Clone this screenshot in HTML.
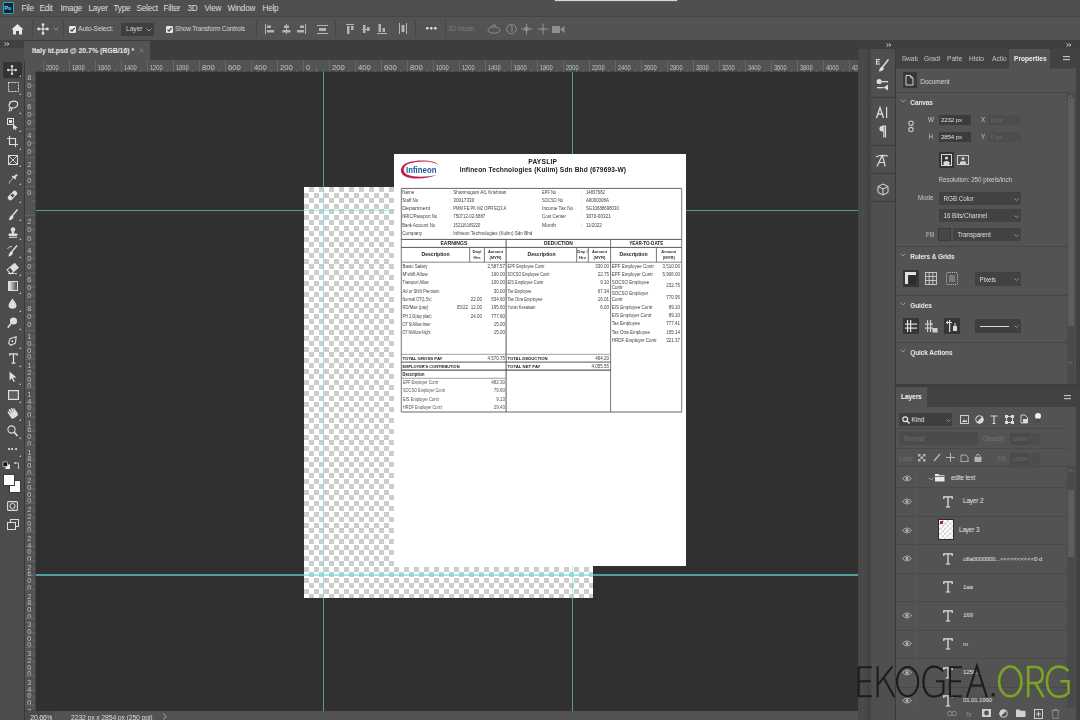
<!DOCTYPE html><html><head><meta charset="utf-8"><style>
*{margin:0;padding:0;box-sizing:border-box}
html,body{width:1080px;height:720px;overflow:hidden;background:#424242;font-family:"Liberation Sans",sans-serif;color:#d6d6d6}
.a{position:absolute}
.t{position:absolute;white-space:nowrap;line-height:1}
svg{position:absolute;overflow:visible}
</style></head><body><div id="root" style="position:absolute;left:0;top:0;width:1080px;height:720px;overflow:hidden;filter:blur(0.5px)">
<div class="a" style="left:0px;top:0px;width:1080px;height:16px;background:#4f4f4f;"></div>
<div class="a" style="left:0px;top:16px;width:1080px;height:1px;background:#444444;"></div>
<div class="a" style="left:0px;top:17px;width:1080px;height:23.5px;background:#535353;"></div>
<div class="a" style="left:0px;top:40px;width:1080px;height:1px;background:#3c3c3c;"></div>
<div class="a" style="left:555px;top:0px;width:122px;height:1px;background:#d8d8d8;"></div>
<div class="a" style="left:553px;top:1px;width:126px;height:1px;background:#606060;"></div>
<div class="a" style="left:3px;top:2px;width:11px;height:12px;background:#0a2a3a;border:1px solid #2fa3c8;border-radius:1px"></div>
<div class="t" style="left:4.6px;top:5.86px;font-size:5.6px;color:#7fd8f8;font-weight:bold;letter-spacing:-0.2px">Ps</div>
<div class="t" style="left:21.5px;top:4.66px;font-size:8.2px;color:#dedede;letter-spacing:-0.25px">File</div>
<div class="t" style="left:39.5px;top:4.66px;font-size:8.2px;color:#dedede;letter-spacing:-0.25px">Edit</div>
<div class="t" style="left:60.5px;top:4.66px;font-size:8.2px;color:#dedede;letter-spacing:-0.25px">Image</div>
<div class="t" style="left:88.5px;top:4.66px;font-size:8.2px;color:#dedede;letter-spacing:-0.25px">Layer</div>
<div class="t" style="left:113.5px;top:4.66px;font-size:8.2px;color:#dedede;letter-spacing:-0.25px">Type</div>
<div class="t" style="left:136.5px;top:4.66px;font-size:8.2px;color:#dedede;letter-spacing:-0.25px">Select</div>
<div class="t" style="left:163.5px;top:4.66px;font-size:8.2px;color:#dedede;letter-spacing:-0.25px">Filter</div>
<div class="t" style="left:187.5px;top:4.66px;font-size:8.2px;color:#dedede;letter-spacing:-0.25px">3D</div>
<div class="t" style="left:204.5px;top:4.66px;font-size:8.2px;color:#dedede;letter-spacing:-0.25px">View</div>
<div class="t" style="left:227.5px;top:4.66px;font-size:8.2px;color:#dedede;letter-spacing:-0.25px">Window</div>
<div class="t" style="left:262.5px;top:4.66px;font-size:8.2px;color:#dedede;letter-spacing:-0.25px">Help</div>
<svg style="left:11px;top:23px;" width="13" height="12" viewBox="0 0 13 12"><path d="M6.5 1 L12.5 6.5 L11 6.5 L11 11.5 L8 11.5 L8 8 L5 8 L5 11.5 L2 11.5 L2 6.5 L0.5 6.5 Z" fill="#e8e8e8"/></svg>
<div class="a" style="left:32px;top:20px;width:1px;height:17px;background:#474747;"></div>
<svg style="left:37px;top:23px;" width="12" height="12" viewBox="0 0 12 12"><g stroke="#e0e0e0" stroke-width="1.2" fill="#e0e0e0"><line x1="6" y1="1" x2="6" y2="11"/><line x1="1" y1="6" x2="11" y2="6"/></g><g fill="#e0e0e0"><circle cx="6" cy="1.6" r="1.4"/><circle cx="6" cy="10.4" r="1.4"/><circle cx="1.6" cy="6" r="1.4"/><circle cx="10.4" cy="6" r="1.4"/></g></svg>
<svg style="left:53px;top:27px;" width="6" height="4" viewBox="0 0 6 4"><path d="M0.5 0.5 L3 3 L5.5 0.5" stroke="#9a9a9a" stroke-width="0.9" fill="none"/></svg>
<div class="a" style="left:63px;top:20px;width:1px;height:17px;background:#474747;"></div>
<svg style="left:68.5px;top:25.5px;" width="7" height="7" viewBox="0 0 7 7"><rect x="0" y="0" width="7" height="7" rx="1.2" fill="#e6e6e6"/><path d="M1.5 3.6 L3 5.2 L5.6 1.8" stroke="#3a3a3a" stroke-width="1.1" fill="none"/></svg>
<div class="t" style="left:78px;top:26.24px;font-size:6.8px;color:#d2d2d2;letter-spacing:-0.15px">Auto-Select:</div>
<div class="a" style="left:121px;top:22.5px;width:33px;height:13px;background:#3e3e3e;border-radius:1px"></div>
<div class="t" style="left:126px;top:26.41px;font-size:6.6px;color:#d0d0d0;">Layer</div>
<svg style="left:146px;top:28px;" width="6" height="4" viewBox="0 0 6 4"><path d="M0.5 0.5 L3 3 L5.5 0.5" stroke="#a8a8a8" stroke-width="0.9" fill="none"/></svg>
<svg style="left:165.5px;top:25.5px;" width="7" height="7" viewBox="0 0 7 7"><rect x="0" y="0" width="7" height="7" rx="1.2" fill="#e6e6e6"/><path d="M1.5 3.6 L3 5.2 L5.6 1.8" stroke="#3a3a3a" stroke-width="1.1" fill="none"/></svg>
<div class="t" style="left:175px;top:26.41px;font-size:6.6px;color:#d2d2d2;letter-spacing:-0.2px">Show Transform Controls</div>
<div class="a" style="left:256px;top:20px;width:1px;height:17px;background:#474747;"></div>
<svg style="left:265px;top:24px;" width="9" height="10" viewBox="0 0 9 10"><rect x="0" y="0" width="1" height="10" fill="#b4b4b4"/><rect x="2" y="1.5" width="4" height="2.5" fill="#b4b4b4"/><rect x="2" y="6" width="7" height="2.5" fill="#b4b4b4"/></svg>
<svg style="left:282px;top:24px;" width="9" height="10" viewBox="0 0 9 10"><rect x="4" y="0" width="1" height="10" fill="#b4b4b4"/><rect x="2" y="1.5" width="5" height="2.5" fill="#b4b4b4"/><rect x="0.5" y="6" width="8" height="2.5" fill="#b4b4b4"/></svg>
<svg style="left:297px;top:24px;" width="9" height="10" viewBox="0 0 9 10"><rect x="8" y="0" width="1" height="10" fill="#b4b4b4"/><rect x="3" y="1.5" width="4" height="2.5" fill="#b4b4b4"/><rect x="0" y="6" width="7" height="2.5" fill="#b4b4b4"/></svg>
<svg style="left:317px;top:25px;" width="11" height="9" viewBox="0 0 11 9"><rect x="0" y="0" width="11" height="1" fill="#b4b4b4"/><rect x="2" y="3" width="7" height="3" fill="#b4b4b4"/><rect x="0" y="8" width="11" height="1" fill="#b4b4b4"/></svg>
<div class="a" style="left:335px;top:20px;width:1px;height:17px;background:#474747;"></div>
<svg style="left:346px;top:24px;" width="8" height="10" viewBox="0 0 8 10"><rect x="0" y="0" width="8" height="1" fill="#b4b4b4"/><rect x="1" y="2" width="2.5" height="8" fill="#b4b4b4"/><rect x="5" y="2" width="2.5" height="4" fill="#b4b4b4"/></svg>
<svg style="left:362px;top:24px;" width="8" height="10" viewBox="0 0 8 10"><rect x="0" y="5" width="8" height="1" fill="#b4b4b4"/><rect x="1" y="1" width="2.5" height="8" fill="#b4b4b4"/><rect x="5" y="3" width="2.5" height="4" fill="#b4b4b4"/></svg>
<svg style="left:377px;top:24px;" width="10" height="10" viewBox="0 0 10 10"><rect x="0" y="9" width="10" height="1" fill="#b4b4b4"/><rect x="1.5" y="0" width="2.5" height="8" fill="#b4b4b4"/><rect x="5.5" y="4" width="2.5" height="4" fill="#b4b4b4"/></svg>
<svg style="left:399px;top:23px;" width="8" height="11" viewBox="0 0 8 11"><rect x="0" y="0" width="1" height="11" fill="#b4b4b4"/><rect x="2.5" y="2" width="3" height="7" fill="#b4b4b4"/><rect x="7" y="0" width="1" height="11" fill="#b4b4b4"/></svg>
<div class="a" style="left:415px;top:20px;width:1px;height:17px;background:#474747;"></div>
<svg style="left:425.7px;top:27.2px;" width="3" height="3" viewBox="0 0 3 3"><circle cx="1.3" cy="1.3" r="1.3" fill="#e6e6e6"/></svg>
<svg style="left:429.7px;top:27.2px;" width="3" height="3" viewBox="0 0 3 3"><circle cx="1.3" cy="1.3" r="1.3" fill="#e6e6e6"/></svg>
<svg style="left:433.7px;top:27.2px;" width="3" height="3" viewBox="0 0 3 3"><circle cx="1.3" cy="1.3" r="1.3" fill="#e6e6e6"/></svg>
<div class="a" style="left:445px;top:20px;width:1px;height:17px;background:#474747;"></div>
<div class="t" style="left:448px;top:26.41px;font-size:6.6px;color:#7a7a7a;letter-spacing:-0.2px">3D Mode:</div>
<svg style="left:487px;top:23px;" width="14" height="12" viewBox="0 0 14 12"><ellipse cx="7" cy="7" rx="6" ry="3.2" stroke="#8e8e8e" stroke-width="1" fill="none"/><path d="M3 5 Q5 1 9 2" stroke="#8e8e8e" stroke-width="1" fill="none"/></svg>
<svg style="left:506px;top:23px;" width="11" height="12" viewBox="0 0 11 12"><circle cx="5.5" cy="6" r="4.8" stroke="#8e8e8e" stroke-width="1" fill="none"/><path d="M4 3 L6 3 L6 9" stroke="#8e8e8e" stroke-width="1" fill="none"/></svg>
<svg style="left:521px;top:23px;" width="11" height="12" viewBox="0 0 11 12"><g stroke="#8e8e8e" stroke-width="1.1"><line x1="5.5" y1="0.5" x2="5.5" y2="11.5"/><line x1="0" y1="6" x2="11" y2="6"/></g><rect x="3.5" y="4" width="4" height="4" fill="#8e8e8e"/></svg>
<svg style="left:537px;top:23px;" width="12" height="12" viewBox="0 0 12 12"><g stroke="#8e8e8e" stroke-width="1.1"><line x1="6" y1="0.5" x2="6" y2="4"/><line x1="6" y1="8" x2="6" y2="11.5"/><line x1="0.5" y1="6" x2="4" y2="6"/><line x1="8" y1="6" x2="11.5" y2="6"/></g><rect x="4.5" y="4.5" width="3" height="3" fill="#8e8e8e"/></svg>
<svg style="left:552px;top:25px;" width="13" height="9" viewBox="0 0 13 9"><rect x="0" y="1" width="8" height="7" fill="#8e8e8e"/><path d="M8 4.5 L12.5 1 L12.5 8 Z" fill="#8e8e8e"/></svg>
<div class="a" style="left:0px;top:40px;width:24px;height:680px;background:#4c4c4c;"></div>
<div class="a" style="left:0px;top:40px;width:24px;height:8px;background:#404040;"></div>
<svg style="left:4px;top:42px;" width="6" height="4" viewBox="0 0 6 4"><path d="M0.5 0.5 L2.5 2 L0.5 3.5 M3 0.5 L5 2 L3 3.5" stroke="#c8c8c8" stroke-width="0.9" fill="none"/></svg>
<div class="a" style="left:24px;top:40px;width:1px;height:680px;background:#383838;"></div>
<div class="a" style="left:25px;top:40px;width:833px;height:20px;background:#3d3d3d;"></div>
<div class="a" style="left:24px;top:41px;width:126px;height:19.5px;background:#535353;"></div>
<div class="t" style="left:32px;top:47.47px;font-size:7.0px;color:#e8e8e8;font-weight:bold;letter-spacing:-0.05px">Italy id.psd @ 20.7% (RGB/16) *</div>
<svg style="left:139px;top:48px;" width="5" height="5" viewBox="0 0 5 5"><path d="M0.5 0.5 L4.5 4.5 M4.5 0.5 L0.5 4.5" stroke="#8a8a8a" stroke-width="0.8"/></svg>
<div class="a" style="left:25px;top:60px;width:833px;height:12px;background:#535353;"></div>
<div class="a" style="left:25px;top:72px;width:11px;height:638px;background:#535353;"></div>
<div class="a" style="left:25px;top:71px;width:833px;height:1px;background:#464646;"></div>
<div class="a" style="left:35px;top:72px;width:1px;height:639px;background:#464646;"></div>
<svg style="left:0px;top:60px" width="858" height="12" viewBox="0 0 858 12"><rect x="43.0" y="0" width="1" height="12" fill="#666666"/><rect x="49.5" y="10" width="1" height="2" fill="#6a6a6a"/><rect x="56.0" y="8" width="1" height="4" fill="#6a6a6a"/><rect x="62.5" y="10" width="1" height="2" fill="#6a6a6a"/><text x="45.9" y="10.4" font-size="7.4" fill="#c4c4c4" font-family="Liberation Sans" textLength="12.8" lengthAdjust="spacingAndGlyphs">2000</text><rect x="69.0" y="0" width="1" height="12" fill="#666666"/><rect x="75.5" y="10" width="1" height="2" fill="#6a6a6a"/><rect x="82.0" y="8" width="1" height="4" fill="#6a6a6a"/><rect x="88.5" y="10" width="1" height="2" fill="#6a6a6a"/><text x="71.9" y="10.4" font-size="7.4" fill="#c4c4c4" font-family="Liberation Sans" textLength="12.8" lengthAdjust="spacingAndGlyphs">1800</text><rect x="95.0" y="0" width="1" height="12" fill="#666666"/><rect x="101.5" y="10" width="1" height="2" fill="#6a6a6a"/><rect x="108.0" y="8" width="1" height="4" fill="#6a6a6a"/><rect x="114.5" y="10" width="1" height="2" fill="#6a6a6a"/><text x="97.9" y="10.4" font-size="7.4" fill="#c4c4c4" font-family="Liberation Sans" textLength="12.8" lengthAdjust="spacingAndGlyphs">1600</text><rect x="121.0" y="0" width="1" height="12" fill="#666666"/><rect x="127.5" y="10" width="1" height="2" fill="#6a6a6a"/><rect x="134.0" y="8" width="1" height="4" fill="#6a6a6a"/><rect x="140.5" y="10" width="1" height="2" fill="#6a6a6a"/><text x="123.9" y="10.4" font-size="7.4" fill="#c4c4c4" font-family="Liberation Sans" textLength="12.8" lengthAdjust="spacingAndGlyphs">1400</text><rect x="147.0" y="0" width="1" height="12" fill="#666666"/><rect x="153.5" y="10" width="1" height="2" fill="#6a6a6a"/><rect x="160.0" y="8" width="1" height="4" fill="#6a6a6a"/><rect x="166.5" y="10" width="1" height="2" fill="#6a6a6a"/><text x="149.9" y="10.4" font-size="7.4" fill="#c4c4c4" font-family="Liberation Sans" textLength="12.8" lengthAdjust="spacingAndGlyphs">1200</text><rect x="173.0" y="0" width="1" height="12" fill="#666666"/><rect x="179.5" y="10" width="1" height="2" fill="#6a6a6a"/><rect x="186.0" y="8" width="1" height="4" fill="#6a6a6a"/><rect x="192.5" y="10" width="1" height="2" fill="#6a6a6a"/><text x="175.9" y="10.4" font-size="7.4" fill="#c4c4c4" font-family="Liberation Sans" textLength="12.8" lengthAdjust="spacingAndGlyphs">1000</text><rect x="199.0" y="0" width="1" height="12" fill="#666666"/><rect x="205.5" y="10" width="1" height="2" fill="#6a6a6a"/><rect x="212.0" y="8" width="1" height="4" fill="#6a6a6a"/><rect x="218.5" y="10" width="1" height="2" fill="#6a6a6a"/><text x="201.9" y="10.4" font-size="7.4" fill="#c4c4c4" font-family="Liberation Sans" textLength="12.8" lengthAdjust="spacingAndGlyphs">800</text><rect x="225.0" y="0" width="1" height="12" fill="#666666"/><rect x="231.5" y="10" width="1" height="2" fill="#6a6a6a"/><rect x="238.0" y="8" width="1" height="4" fill="#6a6a6a"/><rect x="244.5" y="10" width="1" height="2" fill="#6a6a6a"/><text x="227.9" y="10.4" font-size="7.4" fill="#c4c4c4" font-family="Liberation Sans" textLength="12.8" lengthAdjust="spacingAndGlyphs">600</text><rect x="251.0" y="0" width="1" height="12" fill="#666666"/><rect x="257.5" y="10" width="1" height="2" fill="#6a6a6a"/><rect x="264.0" y="8" width="1" height="4" fill="#6a6a6a"/><rect x="270.5" y="10" width="1" height="2" fill="#6a6a6a"/><text x="253.9" y="10.4" font-size="7.4" fill="#c4c4c4" font-family="Liberation Sans" textLength="12.8" lengthAdjust="spacingAndGlyphs">400</text><rect x="277.0" y="0" width="1" height="12" fill="#666666"/><rect x="283.5" y="10" width="1" height="2" fill="#6a6a6a"/><rect x="290.0" y="8" width="1" height="4" fill="#6a6a6a"/><rect x="296.5" y="10" width="1" height="2" fill="#6a6a6a"/><text x="279.9" y="10.4" font-size="7.4" fill="#c4c4c4" font-family="Liberation Sans" textLength="12.8" lengthAdjust="spacingAndGlyphs">200</text><rect x="303.0" y="0" width="1" height="12" fill="#666666"/><rect x="309.5" y="10" width="1" height="2" fill="#6a6a6a"/><rect x="316.0" y="8" width="1" height="4" fill="#6a6a6a"/><rect x="322.5" y="10" width="1" height="2" fill="#6a6a6a"/><text x="305.9" y="10.4" font-size="7.4" fill="#c4c4c4" font-family="Liberation Sans" textLength="4.1" lengthAdjust="spacingAndGlyphs">0</text><rect x="329.0" y="0" width="1" height="12" fill="#666666"/><rect x="335.5" y="10" width="1" height="2" fill="#6a6a6a"/><rect x="342.0" y="8" width="1" height="4" fill="#6a6a6a"/><rect x="348.5" y="10" width="1" height="2" fill="#6a6a6a"/><text x="331.9" y="10.4" font-size="7.4" fill="#c4c4c4" font-family="Liberation Sans" textLength="12.8" lengthAdjust="spacingAndGlyphs">200</text><rect x="355.0" y="0" width="1" height="12" fill="#666666"/><rect x="361.5" y="10" width="1" height="2" fill="#6a6a6a"/><rect x="368.0" y="8" width="1" height="4" fill="#6a6a6a"/><rect x="374.5" y="10" width="1" height="2" fill="#6a6a6a"/><text x="357.9" y="10.4" font-size="7.4" fill="#c4c4c4" font-family="Liberation Sans" textLength="12.8" lengthAdjust="spacingAndGlyphs">400</text><rect x="381.0" y="0" width="1" height="12" fill="#666666"/><rect x="387.5" y="10" width="1" height="2" fill="#6a6a6a"/><rect x="394.0" y="8" width="1" height="4" fill="#6a6a6a"/><rect x="400.5" y="10" width="1" height="2" fill="#6a6a6a"/><text x="383.9" y="10.4" font-size="7.4" fill="#c4c4c4" font-family="Liberation Sans" textLength="12.8" lengthAdjust="spacingAndGlyphs">600</text><rect x="407.0" y="0" width="1" height="12" fill="#666666"/><rect x="413.5" y="10" width="1" height="2" fill="#6a6a6a"/><rect x="420.0" y="8" width="1" height="4" fill="#6a6a6a"/><rect x="426.5" y="10" width="1" height="2" fill="#6a6a6a"/><text x="409.9" y="10.4" font-size="7.4" fill="#c4c4c4" font-family="Liberation Sans" textLength="12.8" lengthAdjust="spacingAndGlyphs">800</text><rect x="433.0" y="0" width="1" height="12" fill="#666666"/><rect x="439.5" y="10" width="1" height="2" fill="#6a6a6a"/><rect x="446.0" y="8" width="1" height="4" fill="#6a6a6a"/><rect x="452.5" y="10" width="1" height="2" fill="#6a6a6a"/><text x="435.9" y="10.4" font-size="7.4" fill="#c4c4c4" font-family="Liberation Sans" textLength="12.8" lengthAdjust="spacingAndGlyphs">1000</text><rect x="459.0" y="0" width="1" height="12" fill="#666666"/><rect x="465.5" y="10" width="1" height="2" fill="#6a6a6a"/><rect x="472.0" y="8" width="1" height="4" fill="#6a6a6a"/><rect x="478.5" y="10" width="1" height="2" fill="#6a6a6a"/><text x="461.9" y="10.4" font-size="7.4" fill="#c4c4c4" font-family="Liberation Sans" textLength="12.8" lengthAdjust="spacingAndGlyphs">1200</text><rect x="485.0" y="0" width="1" height="12" fill="#666666"/><rect x="491.5" y="10" width="1" height="2" fill="#6a6a6a"/><rect x="498.0" y="8" width="1" height="4" fill="#6a6a6a"/><rect x="504.5" y="10" width="1" height="2" fill="#6a6a6a"/><text x="487.9" y="10.4" font-size="7.4" fill="#c4c4c4" font-family="Liberation Sans" textLength="12.8" lengthAdjust="spacingAndGlyphs">1400</text><rect x="511.0" y="0" width="1" height="12" fill="#666666"/><rect x="517.5" y="10" width="1" height="2" fill="#6a6a6a"/><rect x="524.0" y="8" width="1" height="4" fill="#6a6a6a"/><rect x="530.5" y="10" width="1" height="2" fill="#6a6a6a"/><text x="513.9" y="10.4" font-size="7.4" fill="#c4c4c4" font-family="Liberation Sans" textLength="12.8" lengthAdjust="spacingAndGlyphs">1600</text><rect x="537.0" y="0" width="1" height="12" fill="#666666"/><rect x="543.5" y="10" width="1" height="2" fill="#6a6a6a"/><rect x="550.0" y="8" width="1" height="4" fill="#6a6a6a"/><rect x="556.5" y="10" width="1" height="2" fill="#6a6a6a"/><text x="539.9" y="10.4" font-size="7.4" fill="#c4c4c4" font-family="Liberation Sans" textLength="12.8" lengthAdjust="spacingAndGlyphs">1800</text><rect x="563.0" y="0" width="1" height="12" fill="#666666"/><rect x="569.5" y="10" width="1" height="2" fill="#6a6a6a"/><rect x="576.0" y="8" width="1" height="4" fill="#6a6a6a"/><rect x="582.5" y="10" width="1" height="2" fill="#6a6a6a"/><text x="565.9" y="10.4" font-size="7.4" fill="#c4c4c4" font-family="Liberation Sans" textLength="12.8" lengthAdjust="spacingAndGlyphs">2000</text><rect x="589.0" y="0" width="1" height="12" fill="#666666"/><rect x="595.5" y="10" width="1" height="2" fill="#6a6a6a"/><rect x="602.0" y="8" width="1" height="4" fill="#6a6a6a"/><rect x="608.5" y="10" width="1" height="2" fill="#6a6a6a"/><text x="591.9" y="10.4" font-size="7.4" fill="#c4c4c4" font-family="Liberation Sans" textLength="12.8" lengthAdjust="spacingAndGlyphs">2200</text><rect x="615.0" y="0" width="1" height="12" fill="#666666"/><rect x="621.5" y="10" width="1" height="2" fill="#6a6a6a"/><rect x="628.0" y="8" width="1" height="4" fill="#6a6a6a"/><rect x="634.5" y="10" width="1" height="2" fill="#6a6a6a"/><text x="617.9" y="10.4" font-size="7.4" fill="#c4c4c4" font-family="Liberation Sans" textLength="12.8" lengthAdjust="spacingAndGlyphs">2400</text><rect x="641.0" y="0" width="1" height="12" fill="#666666"/><rect x="647.5" y="10" width="1" height="2" fill="#6a6a6a"/><rect x="654.0" y="8" width="1" height="4" fill="#6a6a6a"/><rect x="660.5" y="10" width="1" height="2" fill="#6a6a6a"/><text x="643.9" y="10.4" font-size="7.4" fill="#c4c4c4" font-family="Liberation Sans" textLength="12.8" lengthAdjust="spacingAndGlyphs">2600</text><rect x="667.0" y="0" width="1" height="12" fill="#666666"/><rect x="673.5" y="10" width="1" height="2" fill="#6a6a6a"/><rect x="680.0" y="8" width="1" height="4" fill="#6a6a6a"/><rect x="686.5" y="10" width="1" height="2" fill="#6a6a6a"/><text x="669.9" y="10.4" font-size="7.4" fill="#c4c4c4" font-family="Liberation Sans" textLength="12.8" lengthAdjust="spacingAndGlyphs">2800</text><rect x="693.0" y="0" width="1" height="12" fill="#666666"/><rect x="699.5" y="10" width="1" height="2" fill="#6a6a6a"/><rect x="706.0" y="8" width="1" height="4" fill="#6a6a6a"/><rect x="712.5" y="10" width="1" height="2" fill="#6a6a6a"/><text x="695.9" y="10.4" font-size="7.4" fill="#c4c4c4" font-family="Liberation Sans" textLength="12.8" lengthAdjust="spacingAndGlyphs">3000</text><rect x="719.0" y="0" width="1" height="12" fill="#666666"/><rect x="725.5" y="10" width="1" height="2" fill="#6a6a6a"/><rect x="732.0" y="8" width="1" height="4" fill="#6a6a6a"/><rect x="738.5" y="10" width="1" height="2" fill="#6a6a6a"/><text x="721.9" y="10.4" font-size="7.4" fill="#c4c4c4" font-family="Liberation Sans" textLength="12.8" lengthAdjust="spacingAndGlyphs">3200</text><rect x="745.0" y="0" width="1" height="12" fill="#666666"/><rect x="751.5" y="10" width="1" height="2" fill="#6a6a6a"/><rect x="758.0" y="8" width="1" height="4" fill="#6a6a6a"/><rect x="764.5" y="10" width="1" height="2" fill="#6a6a6a"/><text x="747.9" y="10.4" font-size="7.4" fill="#c4c4c4" font-family="Liberation Sans" textLength="12.8" lengthAdjust="spacingAndGlyphs">3400</text><rect x="771.0" y="0" width="1" height="12" fill="#666666"/><rect x="777.5" y="10" width="1" height="2" fill="#6a6a6a"/><rect x="784.0" y="8" width="1" height="4" fill="#6a6a6a"/><rect x="790.5" y="10" width="1" height="2" fill="#6a6a6a"/><text x="773.9" y="10.4" font-size="7.4" fill="#c4c4c4" font-family="Liberation Sans" textLength="12.8" lengthAdjust="spacingAndGlyphs">3600</text><rect x="797.0" y="0" width="1" height="12" fill="#666666"/><rect x="803.5" y="10" width="1" height="2" fill="#6a6a6a"/><rect x="810.0" y="8" width="1" height="4" fill="#6a6a6a"/><rect x="816.5" y="10" width="1" height="2" fill="#6a6a6a"/><text x="799.9" y="10.4" font-size="7.4" fill="#c4c4c4" font-family="Liberation Sans" textLength="12.8" lengthAdjust="spacingAndGlyphs">3800</text><rect x="823.0" y="0" width="1" height="12" fill="#666666"/><rect x="829.5" y="10" width="1" height="2" fill="#6a6a6a"/><rect x="836.0" y="8" width="1" height="4" fill="#6a6a6a"/><rect x="842.5" y="10" width="1" height="2" fill="#6a6a6a"/><text x="825.9" y="10.4" font-size="7.4" fill="#c4c4c4" font-family="Liberation Sans" textLength="12.8" lengthAdjust="spacingAndGlyphs">4000</text><rect x="849.0" y="0" width="1" height="12" fill="#666666"/><rect x="855.5" y="10" width="1" height="2" fill="#6a6a6a"/><text x="851.9" y="10.4" font-size="7.4" fill="#c4c4c4" font-family="Liberation Sans" textLength="12.8" lengthAdjust="spacingAndGlyphs">4200</text></svg>
<svg style="left:25px;top:0px" width="10" height="720" viewBox="0 0 10 720"><rect x="0" y="70.8" width="10" height="1" fill="#666666"/><rect x="8" y="78.0" width="2" height="1" fill="#6a6a6a"/><rect x="6" y="85.2" width="4" height="1" fill="#6a6a6a"/><rect x="8" y="92.4" width="2" height="1" fill="#6a6a6a"/><text x="2.3" y="80.1" font-size="7.4" fill="#c0c0c0" font-family="Liberation Sans">8</text><text x="2.3" y="88.3" font-size="7.4" fill="#c0c0c0" font-family="Liberation Sans">0</text><text x="2.3" y="96.5" font-size="7.4" fill="#c0c0c0" font-family="Liberation Sans">0</text><rect x="0" y="99.6" width="10" height="1" fill="#666666"/><rect x="8" y="106.8" width="2" height="1" fill="#6a6a6a"/><rect x="6" y="114.0" width="4" height="1" fill="#6a6a6a"/><rect x="8" y="121.2" width="2" height="1" fill="#6a6a6a"/><text x="2.3" y="108.9" font-size="7.4" fill="#c0c0c0" font-family="Liberation Sans">6</text><text x="2.3" y="117.1" font-size="7.4" fill="#c0c0c0" font-family="Liberation Sans">0</text><text x="2.3" y="125.3" font-size="7.4" fill="#c0c0c0" font-family="Liberation Sans">0</text><rect x="0" y="128.4" width="10" height="1" fill="#666666"/><rect x="8" y="135.6" width="2" height="1" fill="#6a6a6a"/><rect x="6" y="142.8" width="4" height="1" fill="#6a6a6a"/><rect x="8" y="150.0" width="2" height="1" fill="#6a6a6a"/><text x="2.3" y="137.7" font-size="7.4" fill="#c0c0c0" font-family="Liberation Sans">4</text><text x="2.3" y="145.9" font-size="7.4" fill="#c0c0c0" font-family="Liberation Sans">0</text><text x="2.3" y="154.1" font-size="7.4" fill="#c0c0c0" font-family="Liberation Sans">0</text><rect x="0" y="157.2" width="10" height="1" fill="#666666"/><rect x="8" y="164.4" width="2" height="1" fill="#6a6a6a"/><rect x="6" y="171.6" width="4" height="1" fill="#6a6a6a"/><rect x="8" y="178.8" width="2" height="1" fill="#6a6a6a"/><text x="2.3" y="166.5" font-size="7.4" fill="#c0c0c0" font-family="Liberation Sans">2</text><text x="2.3" y="174.7" font-size="7.4" fill="#c0c0c0" font-family="Liberation Sans">0</text><text x="2.3" y="182.9" font-size="7.4" fill="#c0c0c0" font-family="Liberation Sans">0</text><rect x="0" y="186.0" width="10" height="1" fill="#666666"/><rect x="8" y="193.2" width="2" height="1" fill="#6a6a6a"/><rect x="6" y="200.4" width="4" height="1" fill="#6a6a6a"/><rect x="8" y="207.6" width="2" height="1" fill="#6a6a6a"/><text x="2.3" y="195.3" font-size="7.4" fill="#c0c0c0" font-family="Liberation Sans">0</text><rect x="0" y="214.8" width="10" height="1" fill="#666666"/><rect x="8" y="222.0" width="2" height="1" fill="#6a6a6a"/><rect x="6" y="229.2" width="4" height="1" fill="#6a6a6a"/><rect x="8" y="236.4" width="2" height="1" fill="#6a6a6a"/><text x="2.3" y="224.1" font-size="7.4" fill="#c0c0c0" font-family="Liberation Sans">2</text><text x="2.3" y="232.3" font-size="7.4" fill="#c0c0c0" font-family="Liberation Sans">0</text><text x="2.3" y="240.5" font-size="7.4" fill="#c0c0c0" font-family="Liberation Sans">0</text><rect x="0" y="243.6" width="10" height="1" fill="#666666"/><rect x="8" y="250.8" width="2" height="1" fill="#6a6a6a"/><rect x="6" y="258.0" width="4" height="1" fill="#6a6a6a"/><rect x="8" y="265.2" width="2" height="1" fill="#6a6a6a"/><text x="2.3" y="252.9" font-size="7.4" fill="#c0c0c0" font-family="Liberation Sans">4</text><text x="2.3" y="261.1" font-size="7.4" fill="#c0c0c0" font-family="Liberation Sans">0</text><text x="2.3" y="269.3" font-size="7.4" fill="#c0c0c0" font-family="Liberation Sans">0</text><rect x="0" y="272.4" width="10" height="1" fill="#666666"/><rect x="8" y="279.6" width="2" height="1" fill="#6a6a6a"/><rect x="6" y="286.8" width="4" height="1" fill="#6a6a6a"/><rect x="8" y="294.0" width="2" height="1" fill="#6a6a6a"/><text x="2.3" y="281.7" font-size="7.4" fill="#c0c0c0" font-family="Liberation Sans">6</text><text x="2.3" y="289.9" font-size="7.4" fill="#c0c0c0" font-family="Liberation Sans">0</text><text x="2.3" y="298.1" font-size="7.4" fill="#c0c0c0" font-family="Liberation Sans">0</text><rect x="0" y="301.2" width="10" height="1" fill="#666666"/><rect x="8" y="308.4" width="2" height="1" fill="#6a6a6a"/><rect x="6" y="315.6" width="4" height="1" fill="#6a6a6a"/><rect x="8" y="322.8" width="2" height="1" fill="#6a6a6a"/><text x="2.3" y="310.5" font-size="7.4" fill="#c0c0c0" font-family="Liberation Sans">8</text><text x="2.3" y="318.7" font-size="7.4" fill="#c0c0c0" font-family="Liberation Sans">0</text><text x="2.3" y="326.9" font-size="7.4" fill="#c0c0c0" font-family="Liberation Sans">0</text><rect x="0" y="330.0" width="10" height="1" fill="#666666"/><rect x="8" y="337.2" width="2" height="1" fill="#6a6a6a"/><rect x="6" y="344.4" width="4" height="1" fill="#6a6a6a"/><rect x="8" y="351.6" width="2" height="1" fill="#6a6a6a"/><text x="2.3" y="339.3" font-size="7.4" fill="#c0c0c0" font-family="Liberation Sans">1</text><text x="2.3" y="346.0" font-size="7.4" fill="#c0c0c0" font-family="Liberation Sans">0</text><text x="2.3" y="352.7" font-size="7.4" fill="#c0c0c0" font-family="Liberation Sans">0</text><text x="2.3" y="359.4" font-size="7.4" fill="#c0c0c0" font-family="Liberation Sans">0</text><rect x="0" y="358.8" width="10" height="1" fill="#666666"/><rect x="8" y="366.0" width="2" height="1" fill="#6a6a6a"/><rect x="6" y="373.2" width="4" height="1" fill="#6a6a6a"/><rect x="8" y="380.4" width="2" height="1" fill="#6a6a6a"/><text x="2.3" y="368.1" font-size="7.4" fill="#c0c0c0" font-family="Liberation Sans">1</text><text x="2.3" y="374.8" font-size="7.4" fill="#c0c0c0" font-family="Liberation Sans">2</text><text x="2.3" y="381.5" font-size="7.4" fill="#c0c0c0" font-family="Liberation Sans">0</text><text x="2.3" y="388.2" font-size="7.4" fill="#c0c0c0" font-family="Liberation Sans">0</text><rect x="0" y="387.6" width="10" height="1" fill="#666666"/><rect x="8" y="394.8" width="2" height="1" fill="#6a6a6a"/><rect x="6" y="402.0" width="4" height="1" fill="#6a6a6a"/><rect x="8" y="409.2" width="2" height="1" fill="#6a6a6a"/><text x="2.3" y="396.9" font-size="7.4" fill="#c0c0c0" font-family="Liberation Sans">1</text><text x="2.3" y="403.6" font-size="7.4" fill="#c0c0c0" font-family="Liberation Sans">4</text><text x="2.3" y="410.3" font-size="7.4" fill="#c0c0c0" font-family="Liberation Sans">0</text><text x="2.3" y="417.0" font-size="7.4" fill="#c0c0c0" font-family="Liberation Sans">0</text><rect x="0" y="416.4" width="10" height="1" fill="#666666"/><rect x="8" y="423.6" width="2" height="1" fill="#6a6a6a"/><rect x="6" y="430.8" width="4" height="1" fill="#6a6a6a"/><rect x="8" y="438.0" width="2" height="1" fill="#6a6a6a"/><text x="2.3" y="425.7" font-size="7.4" fill="#c0c0c0" font-family="Liberation Sans">1</text><text x="2.3" y="432.4" font-size="7.4" fill="#c0c0c0" font-family="Liberation Sans">6</text><text x="2.3" y="439.1" font-size="7.4" fill="#c0c0c0" font-family="Liberation Sans">0</text><text x="2.3" y="445.8" font-size="7.4" fill="#c0c0c0" font-family="Liberation Sans">0</text><rect x="0" y="445.2" width="10" height="1" fill="#666666"/><rect x="8" y="452.4" width="2" height="1" fill="#6a6a6a"/><rect x="6" y="459.6" width="4" height="1" fill="#6a6a6a"/><rect x="8" y="466.8" width="2" height="1" fill="#6a6a6a"/><text x="2.3" y="454.5" font-size="7.4" fill="#c0c0c0" font-family="Liberation Sans">1</text><text x="2.3" y="461.2" font-size="7.4" fill="#c0c0c0" font-family="Liberation Sans">8</text><text x="2.3" y="467.9" font-size="7.4" fill="#c0c0c0" font-family="Liberation Sans">0</text><text x="2.3" y="474.6" font-size="7.4" fill="#c0c0c0" font-family="Liberation Sans">0</text><rect x="0" y="474.0" width="10" height="1" fill="#666666"/><rect x="8" y="481.2" width="2" height="1" fill="#6a6a6a"/><rect x="6" y="488.4" width="4" height="1" fill="#6a6a6a"/><rect x="8" y="495.6" width="2" height="1" fill="#6a6a6a"/><text x="2.3" y="483.3" font-size="7.4" fill="#c0c0c0" font-family="Liberation Sans">2</text><text x="2.3" y="490.0" font-size="7.4" fill="#c0c0c0" font-family="Liberation Sans">0</text><text x="2.3" y="496.7" font-size="7.4" fill="#c0c0c0" font-family="Liberation Sans">0</text><text x="2.3" y="503.4" font-size="7.4" fill="#c0c0c0" font-family="Liberation Sans">0</text><rect x="0" y="502.8" width="10" height="1" fill="#666666"/><rect x="8" y="510.0" width="2" height="1" fill="#6a6a6a"/><rect x="6" y="517.2" width="4" height="1" fill="#6a6a6a"/><rect x="8" y="524.4" width="2" height="1" fill="#6a6a6a"/><text x="2.3" y="512.1" font-size="7.4" fill="#c0c0c0" font-family="Liberation Sans">2</text><text x="2.3" y="518.8" font-size="7.4" fill="#c0c0c0" font-family="Liberation Sans">2</text><text x="2.3" y="525.5" font-size="7.4" fill="#c0c0c0" font-family="Liberation Sans">0</text><text x="2.3" y="532.2" font-size="7.4" fill="#c0c0c0" font-family="Liberation Sans">0</text><rect x="0" y="531.6" width="10" height="1" fill="#666666"/><rect x="8" y="538.8" width="2" height="1" fill="#6a6a6a"/><rect x="6" y="546.0" width="4" height="1" fill="#6a6a6a"/><rect x="8" y="553.2" width="2" height="1" fill="#6a6a6a"/><text x="2.3" y="540.9" font-size="7.4" fill="#c0c0c0" font-family="Liberation Sans">2</text><text x="2.3" y="547.6" font-size="7.4" fill="#c0c0c0" font-family="Liberation Sans">4</text><text x="2.3" y="554.3" font-size="7.4" fill="#c0c0c0" font-family="Liberation Sans">0</text><text x="2.3" y="561.0" font-size="7.4" fill="#c0c0c0" font-family="Liberation Sans">0</text><rect x="0" y="560.4" width="10" height="1" fill="#666666"/><rect x="8" y="567.6" width="2" height="1" fill="#6a6a6a"/><rect x="6" y="574.8" width="4" height="1" fill="#6a6a6a"/><rect x="8" y="582.0" width="2" height="1" fill="#6a6a6a"/><text x="2.3" y="569.7" font-size="7.4" fill="#c0c0c0" font-family="Liberation Sans">2</text><text x="2.3" y="576.4" font-size="7.4" fill="#c0c0c0" font-family="Liberation Sans">6</text><text x="2.3" y="583.1" font-size="7.4" fill="#c0c0c0" font-family="Liberation Sans">0</text><text x="2.3" y="589.8" font-size="7.4" fill="#c0c0c0" font-family="Liberation Sans">0</text><rect x="0" y="589.2" width="10" height="1" fill="#666666"/><rect x="8" y="596.4" width="2" height="1" fill="#6a6a6a"/><rect x="6" y="603.6" width="4" height="1" fill="#6a6a6a"/><rect x="8" y="610.8" width="2" height="1" fill="#6a6a6a"/><text x="2.3" y="598.5" font-size="7.4" fill="#c0c0c0" font-family="Liberation Sans">2</text><text x="2.3" y="605.2" font-size="7.4" fill="#c0c0c0" font-family="Liberation Sans">8</text><text x="2.3" y="611.9" font-size="7.4" fill="#c0c0c0" font-family="Liberation Sans">0</text><text x="2.3" y="618.6" font-size="7.4" fill="#c0c0c0" font-family="Liberation Sans">0</text><rect x="0" y="618.0" width="10" height="1" fill="#666666"/><rect x="8" y="625.2" width="2" height="1" fill="#6a6a6a"/><rect x="6" y="632.4" width="4" height="1" fill="#6a6a6a"/><rect x="8" y="639.6" width="2" height="1" fill="#6a6a6a"/><text x="2.3" y="627.3" font-size="7.4" fill="#c0c0c0" font-family="Liberation Sans">3</text><text x="2.3" y="634.0" font-size="7.4" fill="#c0c0c0" font-family="Liberation Sans">0</text><text x="2.3" y="640.7" font-size="7.4" fill="#c0c0c0" font-family="Liberation Sans">0</text><text x="2.3" y="647.4" font-size="7.4" fill="#c0c0c0" font-family="Liberation Sans">0</text><rect x="0" y="646.8" width="10" height="1" fill="#666666"/><rect x="8" y="654.0" width="2" height="1" fill="#6a6a6a"/><rect x="6" y="661.2" width="4" height="1" fill="#6a6a6a"/><rect x="8" y="668.4" width="2" height="1" fill="#6a6a6a"/><text x="2.3" y="656.1" font-size="7.4" fill="#c0c0c0" font-family="Liberation Sans">3</text><text x="2.3" y="662.8" font-size="7.4" fill="#c0c0c0" font-family="Liberation Sans">2</text><text x="2.3" y="669.5" font-size="7.4" fill="#c0c0c0" font-family="Liberation Sans">0</text><text x="2.3" y="676.2" font-size="7.4" fill="#c0c0c0" font-family="Liberation Sans">0</text><rect x="0" y="675.6" width="10" height="1" fill="#666666"/><rect x="8" y="682.8" width="2" height="1" fill="#6a6a6a"/><rect x="6" y="690.0" width="4" height="1" fill="#6a6a6a"/><rect x="8" y="697.2" width="2" height="1" fill="#6a6a6a"/><text x="2.3" y="684.9" font-size="7.4" fill="#c0c0c0" font-family="Liberation Sans">3</text><text x="2.3" y="691.6" font-size="7.4" fill="#c0c0c0" font-family="Liberation Sans">4</text><text x="2.3" y="698.3" font-size="7.4" fill="#c0c0c0" font-family="Liberation Sans">0</text><text x="2.3" y="705.0" font-size="7.4" fill="#c0c0c0" font-family="Liberation Sans">0</text><rect x="0" y="704.4" width="10" height="1" fill="#666666"/><text x="2.3" y="713.7" font-size="7.4" fill="#c0c0c0" font-family="Liberation Sans">3</text><text x="2.3" y="720.4" font-size="7.4" fill="#c0c0c0" font-family="Liberation Sans">6</text><text x="2.3" y="727.1" font-size="7.4" fill="#c0c0c0" font-family="Liberation Sans">0</text><text x="2.3" y="733.8" font-size="7.4" fill="#c0c0c0" font-family="Liberation Sans">0</text></svg>
<div class="a" style="left:25px;top:60px;width:11px;height:12px;background:#535353;"></div>
<div class="a" style="left:36px;top:72px;width:822px;height:639px;background:#303030;"></div>
<div class="a" style="left:322.8px;top:72px;width:1.3px;height:639px;background:rgba(95,200,200,0.72);"></div>
<div class="a" style="left:572px;top:72px;width:1.3px;height:639px;background:rgba(95,200,200,0.72);"></div>
<div class="a" style="left:36px;top:209.8px;width:822px;height:1.3px;background:rgba(95,200,200,0.72);"></div>
<div class="a" style="left:36px;top:574.3px;width:822px;height:1.3px;background:rgba(95,200,200,0.72);"></div>
<div class="a" style="left:36px;top:213px;width:822px;height:1px;background:rgba(120,40,50,0.25);"></div>
<div class="a" style="left:303.5px;top:186.5px;width:289.5px;height:411px;background:conic-gradient(#cdcdcd 25%,#ffffff 0 50%,#cdcdcd 0 75%,#ffffff 0) 0 0/10px 11px"></div>
<div class="a" style="left:322.8px;top:186.5px;width:1.4px;height:411px;background:rgba(80,230,230,0.6);"></div>
<div class="a" style="left:572px;top:186.5px;width:1.4px;height:411px;background:rgba(80,230,230,0.6);"></div>
<div class="a" style="left:303.5px;top:209.8px;width:289.5px;height:1.4px;background:rgba(80,230,230,0.6);"></div>
<div class="a" style="left:303.5px;top:574.3px;width:289.5px;height:1.4px;background:rgba(80,230,230,0.6);"></div>
<div class="a" style="left:393.8px;top:153.7px;width:292.3px;height:412px;background:#ffffff;"></div>
<svg style="left:0;top:0" width="1080" height="720" viewBox="0 0 1080 720" font-family="Liberation Sans"><path d="M438.6 165.2 C 436 160.2, 420 159.2, 408.5 162.2 C 399.8 164.8, 398.6 172.8, 404.8 176.2 C 411.5 179.6, 427.5 179.4, 437.6 174.6 C 428.5 177.4, 413.8 177.8, 407.2 174.6 C 402.2 172.2, 402.4 166.2, 409.2 163.6 C 419.5 160.4, 433.5 161, 438.6 165.2 Z" fill="#c01f48"/><text x="406" y="172.7" font-size="9.8" fill="#1f5aa0" font-weight="bold" textLength="30.5" lengthAdjust="spacingAndGlyphs">Infineon</text><text x="528.3" y="163.7" font-size="6.7" fill="#202020" font-weight="bold" textLength="28.7" lengthAdjust="spacing">PAYSLIP</text><text x="459.7" y="172.2" font-size="6.6" fill="#202020" font-weight="bold" textLength="166.3" lengthAdjust="spacing">Infineon Technologies (Kulim) Sdn Bhd (679693-W)</text><line x1="401.3" y1="188.4" x2="681.7" y2="188.4" stroke="#555" stroke-width="0.9"/><line x1="401.3" y1="188.4" x2="401.3" y2="412" stroke="#555" stroke-width="0.8"/><line x1="681.7" y1="188.4" x2="681.7" y2="412" stroke="#555" stroke-width="0.8"/><text x="402.2" y="193.6" font-size="4.5" fill="#404040" textLength="12" lengthAdjust="spacingAndGlyphs">Name</text><text x="449.6" y="193.6" font-size="4.5" fill="#707070">:</text><text x="453.3" y="193.6" font-size="4.5" fill="#404040" textLength="53" lengthAdjust="spacingAndGlyphs">Shanmugam A/L Krishnan</text><text x="402.2" y="201.8" font-size="4.5" fill="#404040" textLength="16" lengthAdjust="spacingAndGlyphs">Staff No</text><text x="449.6" y="201.8" font-size="4.5" fill="#707070">:</text><text x="453.3" y="201.8" font-size="4.5" fill="#404040" textLength="21" lengthAdjust="spacingAndGlyphs">30017330</text><text x="402.2" y="210.3" font-size="4.5" fill="#404040" textLength="28" lengthAdjust="spacingAndGlyphs">Department</text><text x="449.6" y="210.3" font-size="4.5" fill="#707070">:</text><text x="453.3" y="210.3" font-size="4.5" fill="#404040" textLength="53" lengthAdjust="spacingAndGlyphs">PMM FE PK M2 OPR EQ3 A</text><text x="402.2" y="218.4" font-size="4.5" fill="#404040" textLength="35" lengthAdjust="spacingAndGlyphs">NRIC/Passport No</text><text x="449.6" y="218.4" font-size="4.5" fill="#707070">:</text><text x="453.3" y="218.4" font-size="4.5" fill="#404040" textLength="32" lengthAdjust="spacingAndGlyphs">750712-02-5887</text><text x="402.2" y="226.6" font-size="4.5" fill="#404040" textLength="33" lengthAdjust="spacingAndGlyphs">Bank Account No</text><text x="449.6" y="226.6" font-size="4.5" fill="#707070">:</text><text x="453.3" y="226.6" font-size="4.5" fill="#404040" textLength="27" lengthAdjust="spacingAndGlyphs">152116169220</text><text x="402.2" y="234.9" font-size="4.5" fill="#404040" textLength="20" lengthAdjust="spacingAndGlyphs">Company</text><text x="449.6" y="234.9" font-size="4.5" fill="#707070">:</text><text x="453.3" y="234.9" font-size="4.5" fill="#404040" textLength="79" lengthAdjust="spacingAndGlyphs">Infineon Technologies (Kulim) Sdn Bhd</text><text x="542.1" y="193.6" font-size="4.5" fill="#404040" textLength="14" lengthAdjust="spacingAndGlyphs">EPF No</text><text x="581.0" y="193.6" font-size="4.5" fill="#808080">:</text><text x="585.9" y="193.6" font-size="4.5" fill="#404040" textLength="19" lengthAdjust="spacingAndGlyphs">14837682</text><text x="542.1" y="201.8" font-size="4.5" fill="#404040" textLength="21" lengthAdjust="spacingAndGlyphs">SOCSO No</text><text x="581.0" y="201.8" font-size="4.5" fill="#808080">:</text><text x="585.9" y="201.8" font-size="4.5" fill="#404040" textLength="23" lengthAdjust="spacingAndGlyphs">A0000008A</text><text x="542.1" y="210.3" font-size="4.5" fill="#404040" textLength="31" lengthAdjust="spacingAndGlyphs">Income Tax No</text><text x="581.0" y="210.3" font-size="4.5" fill="#808080">:</text><text x="585.9" y="210.3" font-size="4.5" fill="#404040" textLength="33" lengthAdjust="spacingAndGlyphs">SG10688698030</text><text x="542.1" y="218.4" font-size="4.5" fill="#404040" textLength="24" lengthAdjust="spacingAndGlyphs">Cost Center</text><text x="581.0" y="218.4" font-size="4.5" fill="#808080">:</text><text x="585.9" y="218.4" font-size="4.5" fill="#404040" textLength="25" lengthAdjust="spacingAndGlyphs">3070-00321</text><text x="542.1" y="226.6" font-size="4.5" fill="#404040" textLength="14" lengthAdjust="spacingAndGlyphs">Month</text><text x="581.0" y="226.6" font-size="4.5" fill="#808080">:</text><text x="585.9" y="226.6" font-size="4.5" fill="#404040" textLength="16" lengthAdjust="spacingAndGlyphs">11/2022</text><line x1="401.3" y1="239.4" x2="681.7" y2="239.4" stroke="#444" stroke-width="0.9"/><line x1="401.3" y1="247.4" x2="681.7" y2="247.4" stroke="#444" stroke-width="0.9"/><line x1="401.3" y1="262.2" x2="681.7" y2="262.2" stroke="#777" stroke-width="0.9"/><line x1="506.1" y1="239.4" x2="506.1" y2="412" stroke="#444" stroke-width="0.9"/><line x1="610.6" y1="239.4" x2="610.6" y2="412" stroke="#555" stroke-width="0.8"/><line x1="469.7" y1="247.4" x2="469.7" y2="262.2" stroke="#555" stroke-width="0.8"/><line x1="484.4" y1="247.4" x2="484.4" y2="262.2" stroke="#555" stroke-width="0.8"/><line x1="576.7" y1="247.4" x2="576.7" y2="262.2" stroke="#555" stroke-width="0.8"/><line x1="588.3" y1="247.4" x2="588.3" y2="262.2" stroke="#555" stroke-width="0.8"/><line x1="656.4" y1="247.4" x2="656.4" y2="262.2" stroke="#555" stroke-width="0.8"/><text x="453.9" y="245.0" font-size="4.6" fill="#202020" text-anchor="middle" textLength="27" lengthAdjust="spacingAndGlyphs" font-weight="bold">EARNINGS</text><text x="558.4" y="245.0" font-size="4.6" fill="#202020" text-anchor="middle" textLength="29" lengthAdjust="spacingAndGlyphs" font-weight="bold">DEDUCTION</text><text x="646.2" y="245.0" font-size="4.6" fill="#202020" text-anchor="middle" textLength="34" lengthAdjust="spacingAndGlyphs" font-weight="bold">YEAR-TO-DATE</text><text x="435.5" y="256.0" font-size="4.6" fill="#202020" text-anchor="middle" textLength="28" lengthAdjust="spacingAndGlyphs" font-weight="bold">Description</text><text x="541.5" y="256.0" font-size="4.6" fill="#202020" text-anchor="middle" textLength="28" lengthAdjust="spacingAndGlyphs" font-weight="bold">Description</text><text x="633.5" y="256.0" font-size="4.6" fill="#202020" text-anchor="middle" textLength="28" lengthAdjust="spacingAndGlyphs" font-weight="bold">Description</text><text x="477" y="253.0" font-size="4.3" fill="#303030" text-anchor="middle" font-weight="bold">Day/</text><text x="477" y="259.2" font-size="4.3" fill="#303030" text-anchor="middle" font-weight="bold">Hrs</text><text x="582.5" y="253.0" font-size="4.3" fill="#303030" text-anchor="middle" font-weight="bold">Day /</text><text x="582.5" y="259.2" font-size="4.3" fill="#303030" text-anchor="middle" font-weight="bold">Hrs</text><text x="495.5" y="253.0" font-size="4.3" fill="#303030" text-anchor="middle" textLength="15" lengthAdjust="spacingAndGlyphs" font-weight="bold">Amount</text><text x="495.5" y="259.2" font-size="4.3" fill="#303030" text-anchor="middle" textLength="12" lengthAdjust="spacingAndGlyphs" font-weight="bold">(MYR)</text><text x="599.5" y="253.0" font-size="4.3" fill="#303030" text-anchor="middle" textLength="15" lengthAdjust="spacingAndGlyphs" font-weight="bold">Amount</text><text x="599.5" y="259.2" font-size="4.3" fill="#303030" text-anchor="middle" textLength="12" lengthAdjust="spacingAndGlyphs" font-weight="bold">(MYR)</text><text x="668.8" y="253.0" font-size="4.3" fill="#303030" text-anchor="middle" textLength="15" lengthAdjust="spacingAndGlyphs" font-weight="bold">Amount</text><text x="668.8" y="259.2" font-size="4.3" fill="#303030" text-anchor="middle" textLength="12" lengthAdjust="spacingAndGlyphs" font-weight="bold">(MYR)</text><text x="402.5" y="267.6" font-size="4.5" fill="#404040" textLength="25" lengthAdjust="spacingAndGlyphs">Basic Salary</text><text x="505" y="267.6" font-size="4.5" fill="#404040" text-anchor="end">2,587.57</text><text x="402.5" y="275.9" font-size="4.5" fill="#404040" textLength="25" lengthAdjust="spacingAndGlyphs">M'shift Allow</text><text x="505" y="275.9" font-size="4.5" fill="#404040" text-anchor="end">160.00</text><text x="402.5" y="284.2" font-size="4.5" fill="#404040" textLength="26" lengthAdjust="spacingAndGlyphs">Transport Allow</text><text x="505" y="284.2" font-size="4.5" fill="#404040" text-anchor="end">100.00</text><text x="402.5" y="292.5" font-size="4.5" fill="#404040" textLength="37" lengthAdjust="spacingAndGlyphs">Ad or Shift Premium</text><text x="505" y="292.5" font-size="4.5" fill="#404040" text-anchor="end">30.00</text><text x="402.5" y="300.9" font-size="4.5" fill="#404040" textLength="29" lengthAdjust="spacingAndGlyphs">Normal OT(1.5x)</text><text x="482" y="300.9" font-size="4.5" fill="#404040" text-anchor="end">22.00</text><text x="505" y="300.9" font-size="4.5" fill="#404040" text-anchor="end">534.60</text><text x="402.5" y="309.2" font-size="4.5" fill="#404040" textLength="26" lengthAdjust="spacingAndGlyphs">RD/Max (pay)</text><text x="468" y="309.2" font-size="4.5" fill="#404040" text-anchor="end">05/22</text><text x="482" y="309.2" font-size="4.5" fill="#404040" text-anchor="end">12.00</text><text x="505" y="309.2" font-size="4.5" fill="#404040" text-anchor="end">195.60</text><text x="402.5" y="317.5" font-size="4.5" fill="#404040" textLength="29" lengthAdjust="spacingAndGlyphs">PH 2.0(day plan)</text><text x="482" y="317.5" font-size="4.5" fill="#404040" text-anchor="end">24.00</text><text x="505" y="317.5" font-size="4.5" fill="#404040" text-anchor="end">777.60</text><text x="402.5" y="325.8" font-size="4.5" fill="#404040" textLength="28" lengthAdjust="spacingAndGlyphs">OT S/Allow-Inter</text><text x="505" y="325.8" font-size="4.5" fill="#404040" text-anchor="end">15.00</text><text x="402.5" y="334.1" font-size="4.5" fill="#404040" textLength="28" lengthAdjust="spacingAndGlyphs">OT N/Allow-Night</text><text x="505" y="334.1" font-size="4.5" fill="#404040" text-anchor="end">15.00</text><text x="507.5" y="267.6" font-size="4.5" fill="#404040" textLength="37" lengthAdjust="spacingAndGlyphs">EPF Employee Contr</text><text x="609" y="267.6" font-size="4.5" fill="#404040" text-anchor="end">330.00</text><text x="507.5" y="275.9" font-size="4.5" fill="#404040" textLength="42" lengthAdjust="spacingAndGlyphs">SOCSO Employee Contr</text><text x="609" y="275.9" font-size="4.5" fill="#404040" text-anchor="end">22.75</text><text x="507.5" y="284.2" font-size="4.5" fill="#404040" textLength="36" lengthAdjust="spacingAndGlyphs">EIS Employee Contr</text><text x="609" y="284.2" font-size="4.5" fill="#404040" text-anchor="end">9.10</text><text x="507.5" y="292.5" font-size="4.5" fill="#404040" textLength="24" lengthAdjust="spacingAndGlyphs">Tax Employee</text><text x="609" y="292.5" font-size="4.5" fill="#404040" text-anchor="end">67.34</text><text x="507.5" y="300.9" font-size="4.5" fill="#404040" textLength="35" lengthAdjust="spacingAndGlyphs">Tax Otra Employee</text><text x="609" y="300.9" font-size="4.5" fill="#404040" text-anchor="end">16.01</text><text x="507.5" y="309.2" font-size="4.5" fill="#404040" textLength="28" lengthAdjust="spacingAndGlyphs">Yuran Kesatuan</text><text x="609" y="309.2" font-size="4.5" fill="#404040" text-anchor="end">6.00</text><text x="611.8" y="267.6" font-size="4.5" fill="#404040">EPF Employee Contr</text><text x="680" y="267.6" font-size="4.5" fill="#404040" text-anchor="end">3,510.00</text><text x="611.8" y="275.9" font-size="4.5" fill="#404040">EPF Employer Contr</text><text x="680" y="275.9" font-size="4.5" fill="#404040" text-anchor="end">5,906.00</text><text x="611.8" y="283.7" font-size="4.5" fill="#404040">SOCSO Employee</text><text x="611.8" y="288.9" font-size="4.5" fill="#404040">Contr</text><text x="680" y="286.5" font-size="4.5" fill="#404040" text-anchor="end">232.75</text><text x="611.8" y="295.4" font-size="4.5" fill="#404040">SOCSO Employer</text><text x="611.8" y="300.59999999999997" font-size="4.5" fill="#404040">Contr</text><text x="680" y="298.7" font-size="4.5" fill="#404040" text-anchor="end">770.95</text><text x="611.8" y="308.7" font-size="4.5" fill="#404040">EIS Employee Contr</text><text x="680" y="308.7" font-size="4.5" fill="#404040" text-anchor="end">89.10</text><text x="611.8" y="317.0" font-size="4.5" fill="#404040">EIS Employer Contr</text><text x="680" y="317.0" font-size="4.5" fill="#404040" text-anchor="end">89.10</text><text x="611.8" y="325.3" font-size="4.5" fill="#404040">Tax Employee</text><text x="680" y="325.3" font-size="4.5" fill="#404040" text-anchor="end">777.41</text><text x="611.8" y="333.6" font-size="4.5" fill="#404040">Tax Otra Employee</text><text x="680" y="333.6" font-size="4.5" fill="#404040" text-anchor="end">165.14</text><text x="611.8" y="341.9" font-size="4.5" fill="#404040">HRDF Employer Contr</text><text x="680" y="341.9" font-size="4.5" fill="#404040" text-anchor="end">321.37</text><line x1="401.3" y1="354.3" x2="610.6" y2="354.3" stroke="#888" stroke-width="0.8"/><line x1="401.3" y1="362.1" x2="610.6" y2="362.1" stroke="#444" stroke-width="0.9"/><line x1="401.3" y1="370.1" x2="610.6" y2="370.1" stroke="#333" stroke-width="1.0"/><line x1="401.3" y1="378.3" x2="506.1" y2="378.3" stroke="#888" stroke-width="0.8"/><text x="402.5" y="359.7" font-size="4.4" fill="#202020" textLength="40" lengthAdjust="spacingAndGlyphs" font-weight="bold">TOTAL GROSS PAY</text><text x="505" y="359.7" font-size="4.5" fill="#404040" text-anchor="end">4,570.75</text><text x="507.5" y="359.7" font-size="4.4" fill="#202020" textLength="40" lengthAdjust="spacingAndGlyphs" font-weight="bold">TOTAL DEDUCTION</text><text x="609" y="359.7" font-size="4.5" fill="#404040" text-anchor="end">464.20</text><text x="402.5" y="367.7" font-size="4.4" fill="#202020" textLength="57" lengthAdjust="spacingAndGlyphs" font-weight="bold">EMPLOYER'S CONTRIBUTION</text><text x="507.5" y="367.7" font-size="4.4" fill="#202020" textLength="33" lengthAdjust="spacingAndGlyphs" font-weight="bold">TOTAL NET PAY</text><text x="609" y="367.7" font-size="4.5" fill="#404040" text-anchor="end">4,055.55</text><text x="402.5" y="375.8" font-size="4.5" fill="#202020" textLength="22" lengthAdjust="spacingAndGlyphs" font-weight="bold">Description</text><text x="403" y="384.0" font-size="4.5" fill="#505050" textLength="35" lengthAdjust="spacingAndGlyphs">EPF Employer Contr</text><text x="505" y="384.0" font-size="4.5" fill="#505050" text-anchor="end">482.30</text><text x="403" y="392.3" font-size="4.5" fill="#505050" textLength="42" lengthAdjust="spacingAndGlyphs">SOCSO Employer Contr</text><text x="505" y="392.3" font-size="4.5" fill="#505050" text-anchor="end">79.60</text><text x="403" y="400.5" font-size="4.5" fill="#505050" textLength="36" lengthAdjust="spacingAndGlyphs">EIS Employer Contr</text><text x="505" y="400.5" font-size="4.5" fill="#505050" text-anchor="end">9.13</text><text x="403" y="408.8" font-size="4.5" fill="#505050" textLength="39" lengthAdjust="spacingAndGlyphs">HRDF Employer Contr</text><text x="505" y="408.8" font-size="4.5" fill="#505050" text-anchor="end">29.43</text><line x1="401.3" y1="412" x2="681.7" y2="412" stroke="#555" stroke-width="0.9"/></svg>
<div class="a" style="left:858px;top:40px;width:222px;height:680px;background:#4a4a4a;"></div>
<div class="a" style="left:858px;top:40px;width:222px;height:8.5px;background:#3e3e3e;"></div>
<svg style="left:885.5px;top:43px;" width="6" height="4" viewBox="0 0 6 4"><path d="M0.5 0.5 L2.5 2 L0.5 3.5 M3 0.5 L5 2 L3 3.5" stroke="#d0d0d0" stroke-width="0.9" fill="none"/></svg>
<svg style="left:1065.5px;top:43px;" width="6" height="4" viewBox="0 0 6 4"><path d="M0.5 0.5 L2.5 2 L0.5 3.5 M3 0.5 L5 2 L3 3.5" stroke="#d0d0d0" stroke-width="0.9" fill="none"/></svg>
<div class="a" style="left:858px;top:48.5px;width:12px;height:671.5px;background:#484848;"></div>
<div class="a" style="left:862px;top:48.5px;width:1px;height:671.5px;background:#4e4e4e;"></div>
<div class="a" style="left:866.5px;top:48.5px;width:2.5px;height:671.5px;background:#424242;"></div>
<div class="a" style="left:869.5px;top:48.5px;width:26px;height:671.5px;background:#4f4f4f;"></div>
<div class="a" style="left:869.5px;top:48.5px;width:1px;height:671.5px;background:#434343;"></div>
<div class="a" style="left:870.5px;top:97.3px;width:25px;height:1px;background:#3d3d3d;"></div>
<div class="a" style="left:870.5px;top:144.9px;width:25px;height:1px;background:#3d3d3d;"></div>
<div class="a" style="left:870.5px;top:173.2px;width:25px;height:1px;background:#3d3d3d;"></div>
<div class="a" style="left:870.5px;top:201.4px;width:25px;height:1px;background:#3d3d3d;"></div>
<svg style="left:875px;top:58px;" width="15" height="15" viewBox="0 0 15 15"><g fill="#dcdcdc"><rect x="1" y="1" width="1" height="5.5"/><rect x="1" y="1" width="4" height="1"/><rect x="1" y="3.2" width="3.5" height="1"/><rect x="1" y="5.5" width="4" height="1"/></g><path d="M13.5 1.5 L7.5 9" stroke="#dcdcdc" stroke-width="1.6"/><path d="M7 8.5 C 4.5 9.5, 4.2 12, 4 13.5 C 6 13.2, 8.5 12.5, 9 10.2 Z" fill="#dcdcdc"/></svg>
<svg style="left:875px;top:78px;" width="15" height="13" viewBox="0 0 15 13"><circle cx="4.2" cy="3.5" r="2.6" fill="#dcdcdc"/><rect x="7" y="3" width="6" height="1.3" fill="#dcdcdc"/><rect x="2" y="9" width="6.5" height="1.3" fill="#dcdcdc"/><path d="M8.5 9.6 L13 6.5 L13 12.5 Z" fill="#dcdcdc"/></svg>
<svg style="left:875px;top:106px;" width="15" height="13" viewBox="0 0 15 13"><path d="M1.5 12 L5 1.5 L8.5 12 M3 8 L7 8" stroke="#dcdcdc" stroke-width="1.3" fill="none"/><rect x="11" y="1" width="1.2" height="11" fill="#dcdcdc"/></svg>
<svg style="left:877px;top:125px;" width="10" height="13" viewBox="0 0 10 13"><path d="M5 1 L8.5 1 L8.5 12.5 M6.8 1 L6.8 12.5" stroke="#dcdcdc" stroke-width="1.2" fill="none"/><path d="M5 1 C 1.5 1, 1.5 6.5, 5 6.5 L6 6.5 L6 1 Z" fill="#dcdcdc"/></svg>
<svg style="left:875px;top:154px;" width="15" height="14" viewBox="0 0 15 14"><path d="M2 12.5 L7 2 Q 9 5, 10 12.5 M4 8.5 L10 8.5 M1 3 Q 5 0.5, 13 2" stroke="#dcdcdc" stroke-width="1.2" fill="none"/></svg>
<svg style="left:876.5px;top:183px;" width="12" height="13" viewBox="0 0 12 13"><path d="M6 1 L11 3.5 L11 9.5 L6 12 L1 9.5 L1 3.5 Z M1 3.5 L6 6 L11 3.5 M6 6 L6 12" stroke="#dcdcdc" stroke-width="1" fill="none"/></svg>
<div class="a" style="left:895.3px;top:48.5px;width:0.7px;height:671.5px;background:#3a3a3a;"></div>
<div class="a" style="left:1075.5px;top:48.5px;width:4.5px;height:671.5px;background:#414141;"></div>
<div class="a" style="left:896px;top:48.5px;width:179.5px;height:19.5px;background:#424242;"></div>
<div class="a" style="left:1009px;top:48.5px;width:41px;height:20px;background:#535353;"></div>
<div class="t" style="left:901.7px;top:56.01px;font-size:6.6px;color:#c4c4c4;width:16.5px;overflow:hidden">Swatc</div>
<div class="t" style="left:924px;top:56.01px;font-size:6.6px;color:#c4c4c4;width:16px;overflow:hidden">Gradi</div>
<div class="t" style="left:947px;top:56.01px;font-size:6.6px;color:#c4c4c4;width:16px;overflow:hidden">Patte</div>
<div class="t" style="left:969px;top:56.01px;font-size:6.6px;color:#c4c4c4;width:17px;overflow:hidden">Histo</div>
<div class="t" style="left:992px;top:56.01px;font-size:6.6px;color:#c4c4c4;width:16px;overflow:hidden">Actio</div>
<div class="t" style="left:1014px;top:56.01px;font-size:6.6px;color:#f0f0f0;font-weight:bold;">Properties</div>
<svg style="left:1063px;top:56px;" width="8" height="5" viewBox="0 0 8 5"><rect x="0" y="0" width="7" height="1.2" fill="#bdbdbd"/><rect x="0" y="3" width="7" height="1.2" fill="#bdbdbd"/></svg>
<div class="a" style="left:896px;top:68.5px;width:179.5px;height:315.5px;background:#535353;"></div>
<div class="a" style="left:902.8px;top:71.8px;width:14px;height:16px;background:#393939;"></div>
<svg style="left:905px;top:74.5px;" width="9" height="11" viewBox="0 0 9 11"><path d="M1 0.5 L5.5 0.5 L8 3 L8 10 L1 10 Z" stroke="#d0d0d0" stroke-width="1" fill="none"/><path d="M5.5 0.5 L5.5 3 L8 3" stroke="#d0d0d0" stroke-width="0.8" fill="none"/></svg>
<div class="t" style="left:920.3px;top:78.91px;font-size:6.6px;color:#d4d4d4;letter-spacing:-0.1px">Document</div>
<div class="a" style="left:896px;top:92px;width:171.5px;height:1px;background:#454545;"></div>
<div class="a" style="left:1066.5px;top:93px;width:8px;height:291px;background:#4a4a4a;"></div>
<div class="a" style="left:1067.5px;top:98px;width:6px;height:228px;background:#5e5e5e;"></div>
<svg style="left:1068px;top:95px;" width="5" height="3" viewBox="0 0 5 3"><path d="M0.5 2.5 L2.5 0.5 L4.5 2.5" stroke="#8a8a8a" stroke-width="0.7" fill="none"/></svg>
<svg style="left:1068px;top:361px;" width="5" height="3" viewBox="0 0 5 3"><path d="M0.5 0.5 L2.5 2.5 L4.5 0.5" stroke="#8a8a8a" stroke-width="0.7" fill="none"/></svg>
<svg style="left:899.5px;top:99.0px;" width="6" height="4" viewBox="0 0 6 4"><path d="M0.5 0.5 L3 3 L5.5 0.5" stroke="#9a9a9a" stroke-width="0.9" fill="none"/></svg>
<div class="t" style="left:910.3px;top:99.60px;font-size:6.5px;color:#e8e8e8;font-weight:bold;letter-spacing:-0.1px">Canvas</div>
<div class="t" style="left:928px;top:117.07px;font-size:6.3px;color:#c8c8c8;">W</div>
<div class="t" style="left:928.5px;top:134.27px;font-size:6.3px;color:#c8c8c8;">H</div>
<div class="a" style="left:939px;top:114.6px;width:31.5px;height:10px;background:#3c3c3c;"></div>
<div class="a" style="left:939px;top:132px;width:31.5px;height:10px;background:#3c3c3c;"></div>
<div class="t" style="left:941px;top:116.95px;font-size:6.2px;color:#e0e0e0;letter-spacing:-0.15px">2232 px</div>
<div class="t" style="left:941px;top:134.35px;font-size:6.2px;color:#e0e0e0;letter-spacing:-0.15px">2854 px</div>
<div class="t" style="left:981px;top:117.07px;font-size:6.3px;color:#c0c0c0;">X</div>
<div class="t" style="left:981px;top:134.27px;font-size:6.3px;color:#c0c0c0;">Y</div>
<div class="a" style="left:988px;top:114.6px;width:33px;height:10px;background:#4d4d4d;"></div>
<div class="a" style="left:988px;top:132px;width:33px;height:10px;background:#4d4d4d;"></div>
<div class="t" style="left:991px;top:116.95px;font-size:6.2px;color:#6e6e6e;">0 px</div>
<div class="t" style="left:991px;top:134.35px;font-size:6.2px;color:#6e6e6e;">0 px</div>
<svg style="left:908px;top:120px;" width="6" height="13" viewBox="0 0 6 13"><circle cx="3" cy="3.2" r="2.2" stroke="#c8c8c8" stroke-width="1.1" fill="none"/><circle cx="3" cy="9.6" r="2.2" stroke="#c8c8c8" stroke-width="1.1" fill="none"/></svg>
<div class="a" style="left:938.5px;top:151.5px;width:15px;height:16px;background:#353535;"></div>
<svg style="left:940.5px;top:153.5px;" width="11" height="12" viewBox="0 0 11 12"><rect x="0.5" y="0.5" width="10" height="11" stroke="#d8d8d8" stroke-width="1" fill="none"/><circle cx="5.5" cy="4" r="1.6" fill="#d8d8d8"/><path d="M2.5 11 L2.5 8 Q5.5 5.8 8.5 8 L8.5 11 Z" fill="#d8d8d8"/></svg>
<svg style="left:957px;top:154.5px;" width="12" height="10" viewBox="0 0 12 10"><rect x="0.5" y="0.5" width="11" height="9" stroke="#cfcfcf" stroke-width="1" fill="none"/><circle cx="6" cy="3.6" r="1.5" fill="#cfcfcf"/><path d="M3 9 L3 7 Q6 5 9 7 L9 9 Z" fill="#cfcfcf"/></svg>
<div class="t" style="left:938.5px;top:177.47px;font-size:6.3px;color:#d0d0d0;letter-spacing:-0.05px">Resolution: 250 pixels/inch</div>
<div class="t" style="left:918px;top:195.27px;font-size:6.3px;color:#c8c8c8;letter-spacing:-0.1px">Mode</div>
<div class="a" style="left:939px;top:192px;width:82px;height:13px;background:#424242;"></div>
<div class="t" style="left:943.5px;top:196.08px;font-size:6.4px;color:#dcdcdc;letter-spacing:-0.1px">RGB Color</div>
<svg style="left:1014px;top:197.5px;" width="5" height="3" viewBox="0 0 5 3"><path d="M0.5 0.5 L2.5 2.5 L4.5 0.5" stroke="#a0a0a0" stroke-width="0.8" fill="none"/></svg>
<div class="a" style="left:939px;top:209px;width:82px;height:13px;background:#424242;"></div>
<div class="t" style="left:943.5px;top:213.08px;font-size:6.4px;color:#dcdcdc;letter-spacing:-0.1px">16 Bits/Channel</div>
<svg style="left:1014px;top:214.5px;" width="5" height="3" viewBox="0 0 5 3"><path d="M0.5 0.5 L2.5 2.5 L4.5 0.5" stroke="#a0a0a0" stroke-width="0.8" fill="none"/></svg>
<div class="t" style="left:926px;top:231.87px;font-size:6.3px;color:#c4c4c4;">Fill</div>
<div class="a" style="left:938px;top:228px;width:12.5px;height:12.5px;background:#474747;border:1px solid #3a3a3a"></div>
<div class="a" style="left:953px;top:228px;width:68px;height:13px;background:#424242;"></div>
<div class="t" style="left:957.5px;top:232.08px;font-size:6.4px;color:#dcdcdc;letter-spacing:-0.1px">Transparent</div>
<svg style="left:1014px;top:233.5px;" width="5" height="3" viewBox="0 0 5 3"><path d="M0.5 0.5 L2.5 2.5 L4.5 0.5" stroke="#a0a0a0" stroke-width="0.8" fill="none"/></svg>
<div class="a" style="left:896px;top:245.5px;width:171.5px;height:1px;background:#464646;"></div>
<svg style="left:899.5px;top:253.0px;" width="6" height="4" viewBox="0 0 6 4"><path d="M0.5 0.5 L3 3 L5.5 0.5" stroke="#9a9a9a" stroke-width="0.9" fill="none"/></svg>
<div class="t" style="left:910.3px;top:253.60px;font-size:6.5px;color:#e8e8e8;font-weight:bold;letter-spacing:-0.1px">Rulers &amp; Grids</div>
<div class="a" style="left:903px;top:270px;width:16px;height:17px;background:#363636;"></div>
<svg style="left:905px;top:272px;" width="12" height="13" viewBox="0 0 12 13"><rect x="0" y="0" width="11" height="3" fill="#e0e0e0"/><rect x="0" y="0" width="3" height="12" fill="#e0e0e0"/><rect x="4" y="4" width="7" height="8" fill="#2c2c2c"/></svg>
<svg style="left:925px;top:272px;" width="12" height="13" viewBox="0 0 12 13"><g stroke="#cfcfcf" stroke-width="0.9" fill="none"><rect x="0.5" y="0.5" width="11" height="12"/><line x1="4.2" y1="0.5" x2="4.2" y2="12.5"/><line x1="7.8" y1="0.5" x2="7.8" y2="12.5"/><line x1="0.5" y1="4.5" x2="11.5" y2="4.5"/><line x1="0.5" y1="8.5" x2="11.5" y2="8.5"/></g></svg>
<svg style="left:945.5px;top:272px;" width="12" height="13" viewBox="0 0 12 13"><rect x="0.5" y="0.5" width="11" height="12" rx="1" stroke="#c4c4c4" stroke-width="0.9" fill="none" stroke-dasharray="1.2 1"/><rect x="3" y="3" width="6" height="7" fill="#7a7a7a"/></svg>
<div class="a" style="left:975px;top:272px;width:46px;height:14px;background:#424242;"></div>
<div class="t" style="left:979.5px;top:276.58px;font-size:6.4px;color:#dcdcdc;letter-spacing:-0.1px">Pixels</div>
<svg style="left:1014px;top:278.0px;" width="5" height="3" viewBox="0 0 5 3"><path d="M0.5 0.5 L2.5 2.5 L4.5 0.5" stroke="#a0a0a0" stroke-width="0.8" fill="none"/></svg>
<div class="a" style="left:896px;top:294.6px;width:171.5px;height:1px;background:#464646;"></div>
<svg style="left:899.5px;top:302.0px;" width="6" height="4" viewBox="0 0 6 4"><path d="M0.5 0.5 L3 3 L5.5 0.5" stroke="#9a9a9a" stroke-width="0.9" fill="none"/></svg>
<div class="t" style="left:910.3px;top:302.60px;font-size:6.5px;color:#e8e8e8;font-weight:bold;letter-spacing:-0.1px">Guides</div>
<div class="a" style="left:903px;top:318px;width:16px;height:16px;background:#363636;"></div>
<svg style="left:905px;top:320px;" width="12" height="12" viewBox="0 0 12 12"><g fill="#e0e0e0"><rect x="2" y="0" width="1.2" height="12"/><rect x="5" y="0" width="1.2" height="12"/><rect x="0" y="3.5" width="12" height="1.2"/><rect x="0" y="7.5" width="12" height="1.2"/></g></svg>
<svg style="left:924.5px;top:319.5px;" width="13" height="13" viewBox="0 0 13 13"><g fill="#cfcfcf"><rect x="2" y="0" width="1.2" height="12"/><rect x="5" y="0" width="1.2" height="12"/><rect x="0" y="3.5" width="8" height="1.2"/><rect x="0" y="7.5" width="8" height="1.2"/><rect x="7.5" y="8" width="5" height="4.5"/></g></svg>
<div class="a" style="left:944px;top:318px;width:16px;height:16px;background:#363636;"></div>
<svg style="left:946px;top:320px;" width="12" height="12" viewBox="0 0 12 12"><g fill="#dcdcdc"><rect x="3" y="0" width="1.2" height="12"/><rect x="0" y="2" width="6" height="1"/><path d="M0 2.5 L2 0.5 L2 4.5 Z"/><rect x="7" y="6" width="4" height="5"/><rect x="8.5" y="3" width="1" height="3"/></g></svg>
<div class="a" style="left:975px;top:319px;width:46px;height:14px;background:#3f3f3f;"></div>
<div class="a" style="left:979.5px;top:325.5px;width:29px;height:1.5px;background:#d8d8d8;"></div>
<svg style="left:1014px;top:325px;" width="5" height="3" viewBox="0 0 5 3"><path d="M0.5 0.5 L2.5 2.5 L4.5 0.5" stroke="#a0a0a0" stroke-width="0.8" fill="none"/></svg>
<div class="a" style="left:896px;top:342px;width:171.5px;height:1px;background:#464646;"></div>
<svg style="left:899.5px;top:349.0px;" width="6" height="4" viewBox="0 0 6 4"><path d="M0.5 0.5 L3 3 L5.5 0.5" stroke="#9a9a9a" stroke-width="0.9" fill="none"/></svg>
<div class="t" style="left:910.3px;top:349.60px;font-size:6.5px;color:#e8e8e8;font-weight:bold;letter-spacing:-0.1px">Quick Actions</div>
<div class="a" style="left:895px;top:383.5px;width:185px;height:3px;background:#3d3d3d;"></div>
<div class="a" style="left:896px;top:386.5px;width:179.5px;height:20px;background:#424242;"></div>
<div class="a" style="left:896px;top:386.5px;width:30.5px;height:20px;background:#535353;"></div>
<div class="t" style="left:901px;top:393.81px;font-size:6.6px;color:#f0f0f0;font-weight:bold;letter-spacing:-0.1px">Layers</div>
<svg style="left:1064px;top:395px;" width="8" height="5" viewBox="0 0 8 5"><rect x="0" y="0" width="7" height="1.2" fill="#bdbdbd"/><rect x="0" y="3" width="7" height="1.2" fill="#bdbdbd"/></svg>
<div class="a" style="left:896px;top:406.5px;width:179.5px;height:313.5px;background:#535353;"></div>
<div class="a" style="left:899px;top:413px;width:53px;height:13px;background:#3f3f3f;"></div>
<svg style="left:902px;top:415.5px;" width="8" height="8" viewBox="0 0 8 8"><circle cx="3.2" cy="3.2" r="2.4" stroke="#e6e6e6" stroke-width="1.2" fill="none"/><line x1="5" y1="5" x2="7.5" y2="7.5" stroke="#e6e6e6" stroke-width="1.4"/></svg>
<div class="t" style="left:911.5px;top:416.88px;font-size:6.4px;color:#e4e4e4;">Kind</div>
<svg style="left:946px;top:418.5px;" width="5" height="3" viewBox="0 0 5 3"><path d="M0.5 0.5 L2.5 2.5 L4.5 0.5" stroke="#a8a8a8" stroke-width="0.8" fill="none"/></svg>
<svg style="left:959.5px;top:414.5px;" width="9" height="9" viewBox="0 0 9 9"><rect x="0.5" y="0.5" width="8" height="8" stroke="#dadada" stroke-width="0.9" fill="none"/><path d="M2 7 L4 4.5 L5.5 6 L7 5 L7 7 Z" fill="#dadada"/></svg>
<svg style="left:975px;top:414.5px;" width="9" height="9" viewBox="0 0 9 9"><circle cx="4.5" cy="4.5" r="3.8" stroke="#dadada" stroke-width="1" fill="none"/><path d="M4.5 0.7 A3.8 3.8 0 0 1 4.5 8.3 Z" fill="#dadada" transform="rotate(45 4.5 4.5)"/></svg>
<svg style="left:990px;top:414.5px;" width="8" height="9" viewBox="0 0 8 9"><path d="M0.5 1 L7.5 1 M4 1 L4 8.5 M2.5 8.5 L5.5 8.5" stroke="#dadada" stroke-width="1.1" fill="none"/></svg>
<svg style="left:1005px;top:414.5px;" width="9" height="9" viewBox="0 0 9 9"><rect x="1.5" y="1.5" width="6" height="6" stroke="#dadada" stroke-width="0.9" fill="none"/><g fill="#dadada"><rect x="0" y="0" width="3" height="3"/><rect x="6" y="0" width="3" height="3"/><rect x="0" y="6" width="3" height="3"/><rect x="6" y="6" width="3" height="3"/></g></svg>
<svg style="left:1020px;top:414px;" width="9" height="10" viewBox="0 0 9 10"><path d="M1 1 L5 1 L7.5 3.5 L7.5 9 L1 9 Z" stroke="#dadada" stroke-width="0.9" fill="none"/><rect x="3" y="5" width="5" height="4" fill="#dadada"/></svg>
<svg style="left:1034px;top:411.5px;" width="8" height="12" viewBox="0 0 8 12"><circle cx="4" cy="4" r="3" fill="#f0f0f0"/><rect x="3.3" y="6.5" width="1.4" height="4" fill="#3c3c3c"/></svg>
<div class="a" style="left:896px;top:427.5px;width:171.5px;height:1px;background:#4a4a4a;"></div>
<div class="a" style="left:899px;top:432px;width:79px;height:13px;background:#4b4b4b;"></div>
<div class="t" style="left:904px;top:435.97px;font-size:6.3px;color:#6e6e6e;">Normal</div>
<div class="t" style="left:983px;top:435.97px;font-size:6.3px;color:#747474;">Opacity:</div>
<div class="a" style="left:1010px;top:432.5px;width:20px;height:12px;background:#4a4a4a;"></div>
<div class="t" style="left:1012.5px;top:436.22px;font-size:6px;color:#6a6a6a;">100%</div>
<div class="a" style="left:1031px;top:432.5px;width:9px;height:12px;background:#4d4d4d;"></div>
<div class="a" style="left:896px;top:447.5px;width:171.5px;height:1px;background:#4a4a4a;"></div>
<div class="t" style="left:899.5px;top:455.97px;font-size:6.3px;color:#727272;">Lock:</div>
<svg style="left:918px;top:454px;" width="8" height="8" viewBox="0 0 8 8"><g fill="#b4b4b4"><rect x="0" y="0" width="2.5" height="2.5"/><rect x="5" y="0" width="2.5" height="2.5"/><rect x="2.5" y="2.5" width="2.5" height="2.5"/><rect x="0" y="5" width="2.5" height="2.5"/><rect x="5" y="5" width="2.5" height="2.5"/></g></svg>
<svg style="left:932px;top:453px;" width="9" height="10" viewBox="0 0 9 10"><path d="M8 1 L2 8" stroke="#b4b4b4" stroke-width="1.5"/></svg>
<svg style="left:946px;top:453px;" width="9" height="9" viewBox="0 0 9 9"><path d="M4.5 0 L4.5 9 M0 4.5 L9 4.5" stroke="#b4b4b4" stroke-width="1"/></svg>
<svg style="left:960px;top:454px;" width="9" height="8" viewBox="0 0 9 8"><path d="M0.5 7.5 L8.5 7.5 M1 7.5 L1 1 L6 1 L8 3.5 L8 7.5" stroke="#b4b4b4" stroke-width="0.9" fill="none"/></svg>
<svg style="left:974px;top:453px;" width="8" height="9" viewBox="0 0 8 9"><rect x="0.5" y="4" width="7" height="5" fill="#b4b4b4"/><path d="M2 4 L2 2.5 Q4 0 6 2.5 L6 4" stroke="#b4b4b4" stroke-width="1" fill="none"/></svg>
<div class="t" style="left:997.5px;top:455.97px;font-size:6.3px;color:#727272;">Fill:</div>
<div class="a" style="left:1010px;top:452.5px;width:20px;height:12px;background:#4a4a4a;"></div>
<div class="t" style="left:1012.5px;top:456.22px;font-size:6px;color:#6a6a6a;">100%</div>
<div class="a" style="left:1031px;top:452.5px;width:9px;height:12px;background:#4d4d4d;"></div>
<div class="a" style="left:896px;top:466px;width:179.5px;height:1px;background:#484848;"></div>
<div class="a" style="left:896px;top:486.5px;width:171px;height:1px;background:#4a4a4a;"></div>
<div class="a" style="left:896px;top:515.5px;width:171px;height:1px;background:#4a4a4a;"></div>
<div class="a" style="left:896px;top:544.0px;width:171px;height:1px;background:#4a4a4a;"></div>
<div class="a" style="left:896px;top:572.5px;width:171px;height:1px;background:#4a4a4a;"></div>
<div class="a" style="left:896px;top:601.0px;width:171px;height:1px;background:#4a4a4a;"></div>
<div class="a" style="left:896px;top:629.5px;width:171px;height:1px;background:#4a4a4a;"></div>
<div class="a" style="left:896px;top:658.0px;width:171px;height:1px;background:#4a4a4a;"></div>
<div class="a" style="left:896px;top:686.5px;width:171px;height:1px;background:#4a4a4a;"></div>
<div class="a" style="left:896px;top:707.5px;width:171px;height:1px;background:#4a4a4a;"></div>
<div class="a" style="left:914.5px;top:466.5px;width:1px;height:241.5px;background:#575757;"></div>
<svg style="left:901.5px;top:474.5px;" width="10" height="7" viewBox="0 0 10 7"><path d="M0.5 3.5 Q5 -1.5 9.5 3.5 Q5 8.5 0.5 3.5 Z" stroke="#b4b4b4" stroke-width="0.9" fill="none"/><circle cx="5" cy="3.5" r="1.6" fill="#b4b4b4"/></svg>
<svg style="left:927.5px;top:476.5px;" width="6" height="4" viewBox="0 0 6 4"><path d="M0.5 0.5 L3 3 L5.5 0.5" stroke="#9a9a9a" stroke-width="0.9" fill="none"/></svg>
<svg style="left:935px;top:473px;" width="10" height="9" viewBox="0 0 10 9"><path d="M0 1 L3.5 1 L4.5 2.2 L9.5 2.2 L9.5 8.5 L0 8.5 Z" fill="#e8e8e8"/><rect x="0" y="3.2" width="9.5" height="0.8" fill="#535353"/></svg>
<div class="t" style="left:951px;top:475.27px;font-size:6.3px;color:#e0e0e0;letter-spacing:-0.15px">edite text</div>
<svg style="left:901.5px;top:498.0px;" width="10" height="7" viewBox="0 0 10 7"><path d="M0.5 3.5 Q5 -1.5 9.5 3.5 Q5 8.5 0.5 3.5 Z" stroke="#b4b4b4" stroke-width="0.9" fill="none"/><circle cx="5" cy="3.5" r="1.6" fill="#b4b4b4"/></svg>
<svg style="left:942.5px;top:496px;" width="10" height="12" viewBox="0 0 10 12"><path d="M0.8 3 L0.8 0.8 L9.2 0.8 L9.2 3 M5 0.8 L5 11 M2.8 11 L7.2 11" stroke="#e8e8e8" stroke-width="1.2" fill="none"/></svg>
<div class="t" style="left:963px;top:498.47px;font-size:6.3px;color:#e4e4e4;letter-spacing:-0.1px">Layer 2</div>
<svg style="left:901.5px;top:526.5px;" width="10" height="7" viewBox="0 0 10 7"><path d="M0.5 3.5 Q5 -1.5 9.5 3.5 Q5 8.5 0.5 3.5 Z" stroke="#b4b4b4" stroke-width="0.9" fill="none"/><circle cx="5" cy="3.5" r="1.6" fill="#b4b4b4"/></svg>
<div class="a" style="left:938px;top:519px;width:15.5px;height:21px;background-color:#fff;border:0.8px solid #2c2c2c;background-image:linear-gradient(45deg,#d6d6d6 25%,transparent 25%,transparent 75%,#d6d6d6 75%),linear-gradient(45deg,#d6d6d6 25%,transparent 25%,transparent 75%,#d6d6d6 75%);background-size:5px 5px;background-position:0 0,2.5px 2.5px"></div>
<div class="a" style="left:940px;top:521px;width:2.5px;height:3px;background:#a03030;"></div>
<div class="t" style="left:959px;top:527.07px;font-size:6.3px;color:#e4e4e4;letter-spacing:-0.1px">Layer 3</div>
<svg style="left:901.5px;top:555.3px;" width="10" height="7" viewBox="0 0 10 7"><path d="M0.5 3.5 Q5 -1.5 9.5 3.5 Q5 8.5 0.5 3.5 Z" stroke="#b4b4b4" stroke-width="0.9" fill="none"/><circle cx="5" cy="3.5" r="1.6" fill="#b4b4b4"/></svg>
<svg style="left:942.5px;top:553.3px;" width="10" height="12" viewBox="0 0 10 12"><path d="M0.8 3 L0.8 0.8 L9.2 0.8 L9.2 3 M5 0.8 L5 11 M2.8 11 L7.2 11" stroke="#e8e8e8" stroke-width="1.2" fill="none"/></svg>
<div class="t" style="left:963px;top:555.75px;font-size:6.2px;color:#e0e0e0;letter-spacing:-0.2px">cilla0000000...&lt;&lt;&lt;&lt;&lt;&lt;&lt;&lt;&lt;&lt;0 d</div>
<div class="a" style="left:901px;top:582.8px;width:10px;height:8px;background:#535353;"></div>
<svg style="left:942.5px;top:581.3px;" width="10" height="12" viewBox="0 0 10 12"><path d="M0.8 3 L0.8 0.8 L9.2 0.8 L9.2 3 M5 0.8 L5 11 M2.8 11 L7.2 11" stroke="#e8e8e8" stroke-width="1.2" fill="none"/></svg>
<div class="t" style="left:963px;top:583.75px;font-size:6.2px;color:#e0e0e0;letter-spacing:-0.2px">1aa</div>
<svg style="left:901.5px;top:611.5px;" width="10" height="7" viewBox="0 0 10 7"><path d="M0.5 3.5 Q5 -1.5 9.5 3.5 Q5 8.5 0.5 3.5 Z" stroke="#b4b4b4" stroke-width="0.9" fill="none"/><circle cx="5" cy="3.5" r="1.6" fill="#b4b4b4"/></svg>
<svg style="left:942.5px;top:609.5px;" width="10" height="12" viewBox="0 0 10 12"><path d="M0.8 3 L0.8 0.8 L9.2 0.8 L9.2 3 M5 0.8 L5 11 M2.8 11 L7.2 11" stroke="#e8e8e8" stroke-width="1.2" fill="none"/></svg>
<div class="t" style="left:963px;top:611.95px;font-size:6.2px;color:#e0e0e0;letter-spacing:-0.2px">169</div>
<svg style="left:901.5px;top:640.3px;" width="10" height="7" viewBox="0 0 10 7"><path d="M0.5 3.5 Q5 -1.5 9.5 3.5 Q5 8.5 0.5 3.5 Z" stroke="#b4b4b4" stroke-width="0.9" fill="none"/><circle cx="5" cy="3.5" r="1.6" fill="#b4b4b4"/></svg>
<svg style="left:942.5px;top:638.3px;" width="10" height="12" viewBox="0 0 10 12"><path d="M0.8 3 L0.8 0.8 L9.2 0.8 L9.2 3 M5 0.8 L5 11 M2.8 11 L7.2 11" stroke="#e8e8e8" stroke-width="1.2" fill="none"/></svg>
<div class="t" style="left:963px;top:640.75px;font-size:6.2px;color:#e0e0e0;letter-spacing:-0.2px">m</div>
<svg style="left:901.5px;top:669.0px;" width="10" height="7" viewBox="0 0 10 7"><path d="M0.5 3.5 Q5 -1.5 9.5 3.5 Q5 8.5 0.5 3.5 Z" stroke="#b4b4b4" stroke-width="0.9" fill="none"/><circle cx="5" cy="3.5" r="1.6" fill="#b4b4b4"/></svg>
<svg style="left:942.5px;top:667.0px;" width="10" height="12" viewBox="0 0 10 12"><path d="M0.8 3 L0.8 0.8 L9.2 0.8 L9.2 3 M5 0.8 L5 11 M2.8 11 L7.2 11" stroke="#e8e8e8" stroke-width="1.2" fill="none"/></svg>
<div class="t" style="left:963px;top:669.45px;font-size:6.2px;color:#e0e0e0;letter-spacing:-0.2px">1258...</div>
<svg style="left:901.5px;top:696.7px;" width="10" height="7" viewBox="0 0 10 7"><path d="M0.5 3.5 Q5 -1.5 9.5 3.5 Q5 8.5 0.5 3.5 Z" stroke="#b4b4b4" stroke-width="0.9" fill="none"/><circle cx="5" cy="3.5" r="1.6" fill="#b4b4b4"/></svg>
<svg style="left:942.5px;top:694.7px;" width="10" height="12" viewBox="0 0 10 12"><path d="M0.8 3 L0.8 0.8 L9.2 0.8 L9.2 3 M5 0.8 L5 11 M2.8 11 L7.2 11" stroke="#e8e8e8" stroke-width="1.2" fill="none"/></svg>
<div class="t" style="left:963px;top:697.15px;font-size:6.2px;color:#e0e0e0;letter-spacing:-0.2px">01.01.1990</div>
<div class="a" style="left:1066.5px;top:467px;width:8px;height:241px;background:#4a4a4a;"></div>
<div class="a" style="left:1067.5px;top:490px;width:6px;height:67px;background:#5e5e5e;"></div>
<svg style="left:1068px;top:469px;" width="5" height="3" viewBox="0 0 5 3"><path d="M0.5 2.5 L2.5 0.5 L4.5 2.5" stroke="#8a8a8a" stroke-width="0.7" fill="none"/></svg>
<div class="a" style="left:896px;top:708px;width:179.5px;height:12px;background:#535353;"></div>
<svg style="left:947px;top:709.5px;" width="10" height="7" viewBox="0 0 10 7"><g stroke="#8c8c8c" stroke-width="1" fill="none"><ellipse cx="2.8" cy="3.5" rx="2.3" ry="2.3"/><ellipse cx="7.2" cy="3.5" rx="2.3" ry="2.3"/></g></svg>
<div class="t" style="left:966px;top:710.87px;font-size:7px;color:#8c8c8c;font-style:italic">fx</div>
<svg style="left:982px;top:709px;" width="9" height="8" viewBox="0 0 9 8"><rect x="0" y="0" width="9" height="8" fill="#d0d0d0"/><circle cx="4.5" cy="4" r="2.4" fill="#535353"/></svg>
<svg style="left:999px;top:708.5px;" width="10" height="10" viewBox="0 0 10 10"><circle cx="4.5" cy="4.5" r="3.8" stroke="#d0d0d0" stroke-width="1" fill="none"/><path d="M1.8 7.2 A3.8 3.8 0 0 1 7.2 1.8 Z" fill="#d0d0d0"/></svg>
<svg style="left:1016px;top:709px;" width="10" height="8" viewBox="0 0 10 8"><path d="M0 0.5 L3.5 0.5 L4.5 1.8 L9.5 1.8 L9.5 8 L0 8 Z" fill="#d0d0d0"/></svg>
<svg style="left:1034px;top:708.5px;" width="9" height="10" viewBox="0 0 9 10"><rect x="0.5" y="0.5" width="8" height="9" stroke="#d0d0d0" stroke-width="1" fill="none"/><path d="M4.5 2.5 L4.5 7.5 M2 5 L7 5" stroke="#d0d0d0" stroke-width="1"/></svg>
<svg style="left:1051px;top:708.5px;" width="9" height="10" viewBox="0 0 9 10"><path d="M0.5 1.5 L8.5 1.5 M3 1.5 L3 0.5 L6 0.5 L6 1.5 M1.5 1.5 L2 9.5 L7 9.5 L7.5 1.5" stroke="#8c8c8c" stroke-width="0.9" fill="none"/></svg>
<div class="a" style="left:3px;top:61.5px;width:19px;height:16px;background:#333333;border-radius:1px"></div>
<svg style="left:7px;top:64.5px;" width="10" height="10" viewBox="0 0 10 10"><g stroke="#dedede" stroke-width="1"><line x1="5" y1="1" x2="5" y2="9"/><line x1="1" y1="5" x2="9" y2="5"/></g><g fill="#dedede"><circle cx="5" cy="1.2" r="1.2"/><circle cx="5" cy="8.8" r="1.2"/><circle cx="1.2" cy="5" r="1.2"/><circle cx="8.8" cy="5" r="1.2"/></g></svg>
<svg style="left:18.5px;top:75px;" width="2" height="2" viewBox="0 0 2 2"><path d="M2 0 L2 2 L0 2 Z" fill="#bdbdbd"/></svg>
<svg style="left:18.5px;top:93px;" width="2" height="2" viewBox="0 0 2 2"><path d="M2 0 L2 2 L0 2 Z" fill="#bdbdbd"/></svg>
<svg style="left:18.5px;top:112px;" width="2" height="2" viewBox="0 0 2 2"><path d="M2 0 L2 2 L0 2 Z" fill="#bdbdbd"/></svg>
<svg style="left:18.5px;top:130px;" width="2" height="2" viewBox="0 0 2 2"><path d="M2 0 L2 2 L0 2 Z" fill="#bdbdbd"/></svg>
<svg style="left:18.5px;top:148px;" width="2" height="2" viewBox="0 0 2 2"><path d="M2 0 L2 2 L0 2 Z" fill="#bdbdbd"/></svg>
<svg style="left:18.5px;top:165px;" width="2" height="2" viewBox="0 0 2 2"><path d="M2 0 L2 2 L0 2 Z" fill="#bdbdbd"/></svg>
<svg style="left:18.5px;top:183px;" width="2" height="2" viewBox="0 0 2 2"><path d="M2 0 L2 2 L0 2 Z" fill="#bdbdbd"/></svg>
<svg style="left:18.5px;top:201px;" width="2" height="2" viewBox="0 0 2 2"><path d="M2 0 L2 2 L0 2 Z" fill="#bdbdbd"/></svg>
<svg style="left:18.5px;top:219px;" width="2" height="2" viewBox="0 0 2 2"><path d="M2 0 L2 2 L0 2 Z" fill="#bdbdbd"/></svg>
<svg style="left:18.5px;top:238px;" width="2" height="2" viewBox="0 0 2 2"><path d="M2 0 L2 2 L0 2 Z" fill="#bdbdbd"/></svg>
<svg style="left:18.5px;top:256px;" width="2" height="2" viewBox="0 0 2 2"><path d="M2 0 L2 2 L0 2 Z" fill="#bdbdbd"/></svg>
<svg style="left:18.5px;top:274px;" width="2" height="2" viewBox="0 0 2 2"><path d="M2 0 L2 2 L0 2 Z" fill="#bdbdbd"/></svg>
<svg style="left:18.5px;top:292px;" width="2" height="2" viewBox="0 0 2 2"><path d="M2 0 L2 2 L0 2 Z" fill="#bdbdbd"/></svg>
<svg style="left:18.5px;top:310px;" width="2" height="2" viewBox="0 0 2 2"><path d="M2 0 L2 2 L0 2 Z" fill="#bdbdbd"/></svg>
<svg style="left:18.5px;top:328px;" width="2" height="2" viewBox="0 0 2 2"><path d="M2 0 L2 2 L0 2 Z" fill="#bdbdbd"/></svg>
<svg style="left:18.5px;top:347px;" width="2" height="2" viewBox="0 0 2 2"><path d="M2 0 L2 2 L0 2 Z" fill="#bdbdbd"/></svg>
<svg style="left:18.5px;top:365px;" width="2" height="2" viewBox="0 0 2 2"><path d="M2 0 L2 2 L0 2 Z" fill="#bdbdbd"/></svg>
<svg style="left:18.5px;top:383px;" width="2" height="2" viewBox="0 0 2 2"><path d="M2 0 L2 2 L0 2 Z" fill="#bdbdbd"/></svg>
<svg style="left:18.5px;top:401px;" width="2" height="2" viewBox="0 0 2 2"><path d="M2 0 L2 2 L0 2 Z" fill="#bdbdbd"/></svg>
<svg style="left:18.5px;top:419px;" width="2" height="2" viewBox="0 0 2 2"><path d="M2 0 L2 2 L0 2 Z" fill="#bdbdbd"/></svg>
<svg style="left:18.5px;top:437px;" width="2" height="2" viewBox="0 0 2 2"><path d="M2 0 L2 2 L0 2 Z" fill="#bdbdbd"/></svg>
<svg style="left:18.5px;top:455px;" width="2" height="2" viewBox="0 0 2 2"><path d="M2 0 L2 2 L0 2 Z" fill="#bdbdbd"/></svg>
<svg style="left:7.5px;top:82px;" width="11" height="10" viewBox="0 0 11 10"><rect x="0.5" y="0.5" width="10" height="9" stroke="#dedede" stroke-width="1" fill="none" stroke-dasharray="2 1"/></svg>
<svg style="left:7px;top:100px;" width="12" height="12" viewBox="0 0 12 12"><path d="M2 3 Q6 -0.5 10.5 2.5 Q11.5 7 6.5 8 Q3 8.5 2 6 Q1.5 4 4 3.5 M3 7.5 L2 11.5 M5 8 L4 11" stroke="#dedede" stroke-width="1.1" fill="none"/></svg>
<svg style="left:7px;top:118px;" width="12" height="12" viewBox="0 0 12 12"><rect x="0.5" y="0.5" width="6" height="6" fill="none" stroke="#dedede" stroke-width="1"/><rect x="2" y="2" width="3" height="3" fill="#dedede"/><path d="M6 6 L11 10 L8.5 10.2 L9.5 12 L8.3 12 L7.3 10.5 L6 12 Z" fill="#dedede"/></svg>
<svg style="left:6.5px;top:136px;" width="11" height="11" viewBox="0 0 11 11"><path d="M2.5 0 L2.5 8.5 L11 8.5 M0 2.5 L8.5 2.5 L8.5 11" stroke="#dedede" stroke-width="1.2" fill="none"/></svg>
<svg style="left:8px;top:155px;" width="10" height="10" viewBox="0 0 10 10"><rect x="0.5" y="0.5" width="9" height="9" stroke="#dedede" stroke-width="1" fill="none"/><path d="M0.5 0.5 L9.5 9.5 M9.5 0.5 L0.5 9.5" stroke="#dedede" stroke-width="0.9"/></svg>
<svg style="left:7.5px;top:172.5px;" width="10" height="12" viewBox="0 0 10 12"><path d="M8.5 1 L9.8 2.3 L7.5 4.6 L8.3 5.4 L7.3 6.4 L5.8 4.9 L1.8 8.9 L1.2 11 L0.8 10.8 L1 9 L5 5 L3.6 3.6 L4.6 2.6 L5.4 3.4 Z" fill="#dedede"/></svg>
<svg style="left:7px;top:190px;" width="11" height="11" viewBox="0 0 11 11"><g transform="rotate(-45 5.5 5.5)"><rect x="0" y="3" width="11" height="5" rx="2" fill="#dedede"/><rect x="4" y="4" width="3" height="3" fill="#4c4c4c"/></g></svg>
<svg style="left:7.5px;top:208.5px;" width="10" height="12" viewBox="0 0 10 12"><path d="M9.5 0.5 L4.5 6.5" stroke="#dedede" stroke-width="1.5"/><path d="M4 6 C 1.5 7, 1.5 10, 0.8 11.5 C 3 11, 5.5 10, 5.5 7.5 Z" fill="#dedede"/></svg>
<svg style="left:7.5px;top:227px;" width="10" height="11" viewBox="0 0 10 11"><circle cx="5" cy="2.5" r="2.3" fill="#dedede"/><rect x="3.8" y="4" width="2.4" height="3" fill="#dedede"/><rect x="0.5" y="6.5" width="9" height="2.5" rx="1" fill="#dedede"/><rect x="1" y="9.8" width="8" height="1" fill="#dedede"/></svg>
<svg style="left:7px;top:245px;" width="11" height="12" viewBox="0 0 11 12"><path d="M10 0.5 L5 6.5" stroke="#dedede" stroke-width="1.4"/><path d="M4.5 6 C 2 7, 2 10, 1.3 11.5 C 3.5 11, 6 10, 6 7.5 Z" fill="#dedede"/><path d="M0.5 4 Q 2 1 5 1.5" stroke="#dedede" stroke-width="0.9" fill="none"/></svg>
<svg style="left:7px;top:263px;" width="11" height="11" viewBox="0 0 11 11"><g transform="rotate(-40 5.5 5.5)"><rect x="0.5" y="3" width="10" height="5.5" fill="none" stroke="#dedede" stroke-width="1"/><rect x="4" y="3" width="6.5" height="5.5" fill="#dedede"/></g><rect x="1" y="10" width="9" height="0.9" fill="#dedede"/></svg>
<div class="a" style="left:7.5px;top:281px;width:10px;height:10px;border:1px solid #dedede;background:linear-gradient(90deg,#e8e8e8,#505050)"></div>
<svg style="left:8px;top:298px;" width="9" height="11" viewBox="0 0 9 11"><path d="M4.5 0.5 C 2 4, 0.5 6, 0.5 7.5 C 0.5 9.8, 2.3 10.8, 4.5 10.8 C 6.7 10.8, 8.5 9.8, 8.5 7.5 C 8.5 6, 7 4, 4.5 0.5 Z" fill="#dedede"/></svg>
<svg style="left:7px;top:316.5px;" width="11" height="12" viewBox="0 0 11 12"><circle cx="6.5" cy="4" r="3.6" fill="#dedede"/><path d="M4 6.5 L0.8 10.8" stroke="#dedede" stroke-width="1.5"/></svg>
<svg style="left:7.5px;top:335px;" width="10" height="11" viewBox="0 0 10 11"><g transform="rotate(40 5 5.5)"><path d="M5 0.5 L8.5 6 L6.5 10.5 L3.5 10.5 L1.5 6 Z" fill="none" stroke="#dedede" stroke-width="1.1"/><circle cx="5" cy="6.5" r="1" fill="#dedede"/></g></svg>
<svg style="left:8.5px;top:353px;" width="9" height="11" viewBox="0 0 9 11"><path d="M0.8 2.8 L0.8 0.8 L8.2 0.8 L8.2 2.8 M4.5 0.8 L4.5 10.2 M2.5 10.2 L6.5 10.2" stroke="#dedede" stroke-width="1.3" fill="none"/></svg>
<svg style="left:8.5px;top:371px;" width="8" height="11" viewBox="0 0 8 11"><path d="M0.5 0.5 L7.5 6.5 L4 6.8 L6 10.5 L4.5 10.8 L2.8 7.3 L0.5 9.5 Z" fill="#dedede"/></svg>
<svg style="left:7.5px;top:389.5px;" width="11" height="10" viewBox="0 0 11 10"><rect x="0.6" y="0.6" width="9.8" height="8.8" stroke="#dedede" stroke-width="1.2" fill="#5e5e5e"/></svg>
<svg style="left:7px;top:407px;" width="12" height="13" viewBox="0 0 12 13"><g transform="rotate(-35 6 6.5)"><rect x="2" y="5" width="8" height="6" rx="2.5" fill="#dedede"/><rect x="2.2" y="2" width="1.7" height="5" rx="0.8" fill="#dedede"/><rect x="4.4" y="0.8" width="1.7" height="5" rx="0.8" fill="#dedede"/><rect x="6.6" y="1.2" width="1.7" height="5" rx="0.8" fill="#dedede"/><rect x="8.6" y="2.5" width="1.5" height="4.5" rx="0.7" fill="#dedede"/></g></svg>
<svg style="left:7px;top:425px;" width="11" height="12" viewBox="0 0 11 12"><circle cx="4.5" cy="4.5" r="3.6" stroke="#dedede" stroke-width="1.1" fill="none"/><path d="M7 7 L10.5 11" stroke="#dedede" stroke-width="1.6"/></svg>
<svg style="left:7.700000000000001px;top:447.9px;" width="2.2" height="2.2" viewBox="0 0 2.2 2.2"><circle cx="1.1" cy="1.1" r="1.1" fill="#dedede"/></svg>
<svg style="left:11.200000000000001px;top:447.9px;" width="2.2" height="2.2" viewBox="0 0 2.2 2.2"><circle cx="1.1" cy="1.1" r="1.1" fill="#dedede"/></svg>
<svg style="left:14.700000000000001px;top:447.9px;" width="2.2" height="2.2" viewBox="0 0 2.2 2.2"><circle cx="1.1" cy="1.1" r="1.1" fill="#dedede"/></svg>
<svg style="left:3px;top:462px;" width="7" height="7" viewBox="0 0 7 7"><rect x="2.5" y="2.5" width="4.5" height="4.5" fill="#f0f0f0"/><rect x="0" y="0" width="4.5" height="4.5" fill="#111" stroke="#f0f0f0" stroke-width="0.6"/></svg>
<svg style="left:13.5px;top:462px;" width="6" height="7" viewBox="0 0 6 7"><path d="M0.8 1 L4.5 1 L4.5 5.5" stroke="#d0d0d0" stroke-width="0.9" fill="none"/><circle cx="1" cy="1" r="0.9" fill="#d0d0d0"/><circle cx="4.5" cy="5.8" r="0.9" fill="#d0d0d0"/></svg>
<div class="a" style="left:9px;top:480px;width:11.5px;height:13px;background:#ffffff;border:0.6px solid #3a3a3a"></div>
<div class="a" style="left:3px;top:473.5px;width:11.5px;height:12.5px;background:#ffffff;border:0.6px solid #3a3a3a"></div>
<svg style="left:7px;top:501px;" width="11" height="10" viewBox="0 0 11 10"><rect x="0.6" y="0.6" width="9.8" height="8.8" rx="1" stroke="#dedede" stroke-width="1.1" fill="none"/><circle cx="5.5" cy="5" r="2.6" stroke="#dedede" stroke-width="1" fill="none"/></svg>
<svg style="left:7px;top:519px;" width="12" height="11" viewBox="0 0 12 11"><rect x="3.5" y="0.5" width="8" height="7" stroke="#dedede" stroke-width="1" fill="none"/><rect x="0.5" y="3.5" width="8" height="7" stroke="#dedede" stroke-width="1" fill="#4c4c4c"/></svg>
<div class="a" style="left:25px;top:711px;width:833px;height:9px;background:#535353;"></div>
<div class="a" style="left:25px;top:711px;width:29px;height:9px;background:#4b4b4b;"></div>
<div class="t" style="left:30.3px;top:713.57px;font-size:7px;color:#e0e0e0;letter-spacing:-0.3px">20.66%</div>
<div class="t" style="left:71px;top:713.57px;font-size:7px;color:#dadada;letter-spacing:-0.2px">2232 px x 2854 px (250 ppi)</div>
<svg style="left:163px;top:713px;" width="4" height="7" viewBox="0 0 4 7"><path d="M0.5 0.5 L3 3.5 L0.5 6.5" stroke="#c0c0c0" stroke-width="0.8" fill="none"/></svg>
<svg style="left:0;top:0" width="1080" height="720" viewBox="0 0 1080 720"><path d="M871.9 667.2 L858.7 667.2 L858.7 696.2 L871.9 696.2 M858.7 681.3 L870.8 681.3" stroke="#1c1c1c" stroke-width="2.1" fill="none"/><path d="M877.6 666.2 L877.6 697.2 M892.2 666.6 L878.2 684.3 M883.6 677.6 L894.2 697" stroke="#1c1c1c" stroke-width="2.1" fill="none"/><ellipse cx="907.6" cy="681.6" rx="10.6" ry="14.6" stroke="#1c1c1c" stroke-width="2.1" fill="none"/><path d="M943.2 671.2 C 939.5 667.2, 935.8 666.6, 933.8 666.6 C 927 666.6, 923.4 673.5, 923.4 681.6 C 923.4 689.8, 927 696.6, 933.8 696.6 C 937.6 696.6, 941 695.3, 943.4 692.8 L943.4 681.3 L936 681.3" stroke="#1c1c1c" stroke-width="2.1" fill="none"/><path d="M962 667.2 L949.9 667.2 L949.9 696.2 L962 696.2 M949.9 681.3 L961 681.3" stroke="#1c1c1c" stroke-width="2.1" fill="none"/><path d="M966.8 697.2 L976.9 666 L986.9 697.2 M970.4 685.5 L983.3 685.5" stroke="#1c1c1c" stroke-width="2.1" fill="none"/><rect x="991.6" y="693.2" width="3.2" height="3.2" fill="#1c1c1c"/><ellipse cx="1010.3" cy="681.4" rx="11.2" ry="14.9" stroke="#7ba421" stroke-width="2.6" fill="none"/><path d="M1028.2 697.2 L1028.2 667 L1035.5 667 C 1040.5 667, 1042.7 670.5, 1042.7 675 C 1042.7 679.6, 1040.5 683, 1035.5 683 L1028.2 683 M1035.2 683 L1043.6 697.2" stroke="#7ba421" stroke-width="2.6" fill="none"/><path d="M1068.4 671.2 C 1065 667.2, 1061 666.6, 1058.6 666.6 C 1051 666.6, 1047 673.5, 1047 681.6 C 1047 689.8, 1051 696.6, 1058.6 696.6 C 1062.5 696.6, 1066 695.3, 1068.5 692.8 L1068.5 681.3 L1060.5 681.3" stroke="#7ba421" stroke-width="2.6" fill="none"/></svg>
</div></body></html>
